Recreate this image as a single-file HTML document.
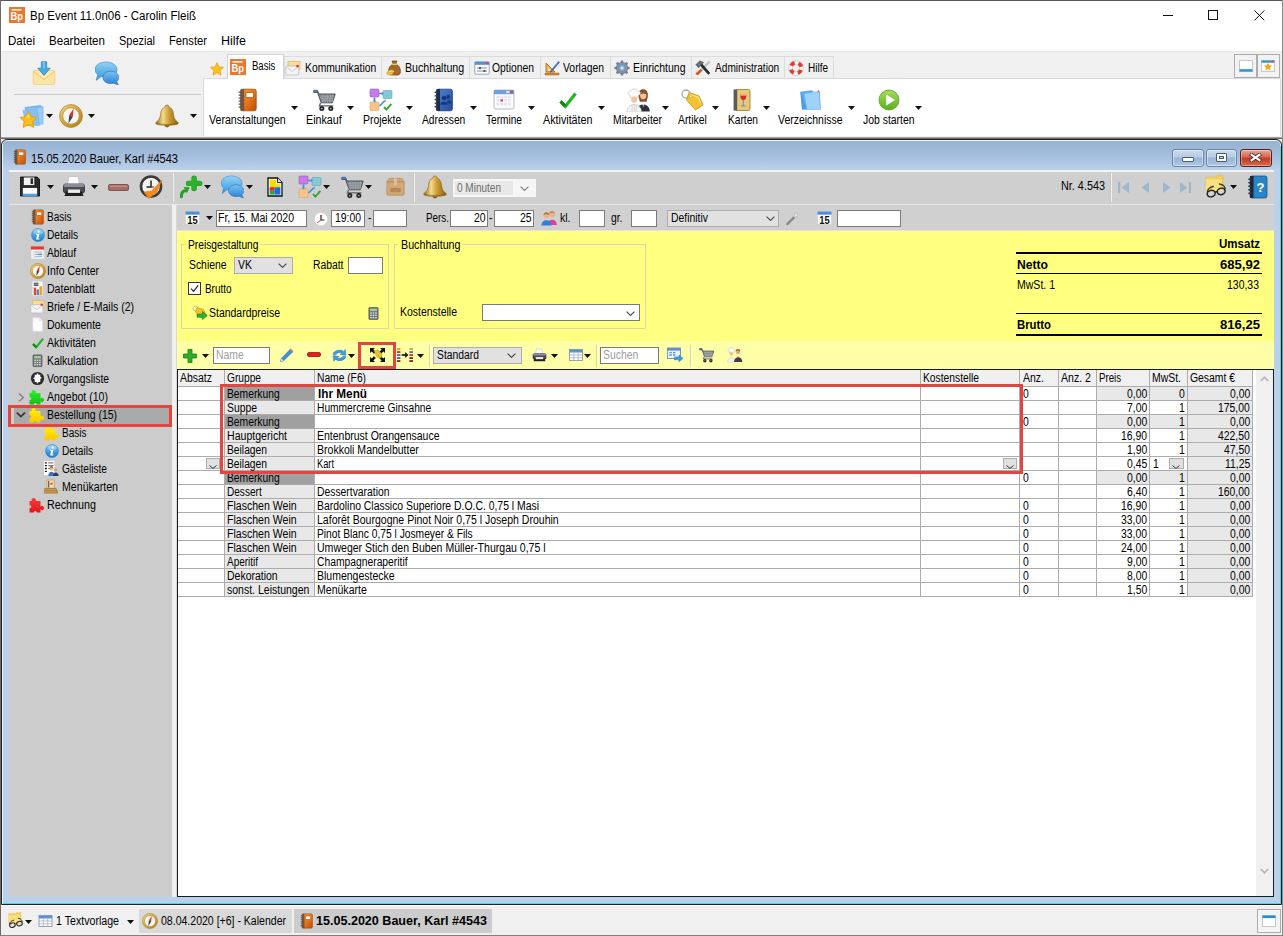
<!DOCTYPE html>
<html lang="de"><head><meta charset="utf-8"><title>Bp Event 11.0n06 - Carolin Fleiß</title>
<style>
html,body{margin:0;padding:0;}
body{width:1283px;height:936px;position:relative;overflow:hidden;background:#f0f0f0;font-family:"Liberation Sans",Arial,sans-serif;font-size:11px;color:#000;}
body div,body svg,body span.t{position:absolute;box-sizing:border-box;}
span.t{white-space:pre;line-height:16px;transform-origin:0 0;}

</style></head><body>
<svg style="left:0;top:0;" width="0" height="0" aria-hidden="true"><defs><linearGradient id="chA" x1="0" y1="0" x2="0" y2="1"><stop offset="0" stop-color="#96d2f4"/><stop offset="1" stop-color="#2f96de"/></linearGradient><linearGradient id="chB" x1="0" y1="0" x2="0" y2="1"><stop offset="0" stop-color="#7cc0f0"/><stop offset="1" stop-color="#2580d4"/></linearGradient><linearGradient id="cpG" x1="0" y1="0" x2="1" y2="1"><stop offset="0" stop-color="#f2dc92"/><stop offset=".5" stop-color="#d4a23a"/><stop offset="1" stop-color="#b07f1c"/></linearGradient><linearGradient id="blG" x1="0" y1="0" x2="1" y2="0"><stop offset="0" stop-color="#9a7018"/><stop offset=".32" stop-color="#f2da8e"/><stop offset=".6" stop-color="#cc9b32"/><stop offset="1" stop-color="#8a6210"/></linearGradient><linearGradient id="nbG" x1="0" y1="0" x2="1" y2="1"><stop offset="0" stop-color="#f59a3a"/><stop offset=".5" stop-color="#e8761a"/><stop offset="1" stop-color="#b8500a"/></linearGradient><linearGradient id="abG" x1="0" y1="0" x2="1" y2="1"><stop offset="0" stop-color="#4f86d4"/><stop offset="1" stop-color="#234a9a"/></linearGradient><linearGradient id="pgG" x1="0" y1="0" x2="0" y2="1"><stop offset="0" stop-color="#a6dc5a"/><stop offset="1" stop-color="#5fae1e"/></linearGradient><linearGradient id="inG" x1="0" y1="0" x2="0" y2="1"><stop offset="0" stop-color="#7cc4f0"/><stop offset="1" stop-color="#1a7ccc"/></linearGradient><linearGradient id="pzg" x1="0" y1="0" x2="0" y2="1"><stop offset="0" stop-color="#30f030"/><stop offset="1" stop-color="#10c010"/></linearGradient><linearGradient id="pzy" x1="0" y1="0" x2="0" y2="1"><stop offset="0" stop-color="#fff400"/><stop offset="1" stop-color="#ffc400"/></linearGradient><linearGradient id="pzr" x1="0" y1="0" x2="0" y2="1"><stop offset="0" stop-color="#ff3838"/><stop offset="1" stop-color="#e01818"/></linearGradient></defs></svg>
<div style="left:0px;top:0px;width:1283px;height:936px;background:#f0f0f0;"></div>
<div style="left:0px;top:0px;width:1283px;height:51px;background:#fff;"></div>
<svg style="left:9px;top:7px;" width="16" height="16" viewBox="0 0 16 16.000"><rect x="0" y="0" width="16" height="16" fill="#e9772c"/><rect x="2.5" y="2.2" width="10" height="1.4" fill="#fff"/><text x="1.6" y="13" font-family="Liberation Sans,sans-serif" font-size="11" font-weight="700" fill="#fff" textLength="12.5" lengthAdjust="spacingAndGlyphs">Bp</text></svg>
<span class="t" style="left:30.00px;top:7.84px;font-size:12px;transform:scaleX(0.9584);">Bp Event 11.0n06 - Carolin Fleiß</span>
<div style="left:1163px;top:15px;width:10px;height:1px;background:#111;"></div>
<div style="left:1208px;top:10px;width:10px;height:10px;border:1px solid #111;"></div>
<svg style="left:1254px;top:10px;" width="11" height="11" viewBox="0 0 11 11"><path d="M.5 .5 L10.3 10.3 M10.3 .5 L.5 10.3" stroke="#111" stroke-width="1"/></svg>
<span class="t" style="left:8.00px;top:32.84px;font-size:12px;transform:scaleX(0.9637);">Datei</span>
<span class="t" style="left:49.00px;top:32.84px;font-size:12px;transform:scaleX(0.9647);">Bearbeiten</span>
<span class="t" style="left:119.00px;top:32.84px;font-size:12px;transform:scaleX(0.9146);">Spezial</span>
<span class="t" style="left:169.00px;top:32.84px;font-size:12px;transform:scaleX(0.9339);">Fenster</span>
<span class="t" style="left:221.00px;top:32.84px;font-size:12px;transform:scaleX(1.0410);">Hilfe</span>
<div style="left:0px;top:51px;width:1283px;height:87px;background:#f0f0f0;"></div>
<div style="left:0px;top:51px;width:1283px;height:1px;background:#e9e9e9;"></div>
<svg style="left:32px;top:61px;" width="24" height="24" viewBox="0 0 24 24.000"><rect x="1.2" y="9.6" width="21.6" height="14" rx="1.2" fill="#fae6a6" stroke="#ecd07c" stroke-width=".8"/><path d="M1.6 10.2 L12 18.6 L22.4 10.2" fill="#fbeab4" stroke="#e6c766" stroke-width="1"/><path d="M1.8 23 L9.6 16.2 M22.2 23 L14.4 16.2" stroke="#efd78c" stroke-width=".9"/><path d="M9.4 .8 h5.2 v6.4 h3.6 L12 14.4 L5.8 7.2 h3.6 z" fill="#48aae4" stroke="#2886c8" stroke-width=".8"/><path d="M10.4 1.6 h1.6 v6" stroke="#9ad4f4" stroke-width="1" fill="none"/></svg>
<svg style="left:95px;top:61px;" width="24" height="24" viewBox="0 0 24 24.000"><path d="M11 1 C17.2 1 22 4.4 22 8.6 C22 12.8 17.2 16.2 11 16.2 C9.2 16.2 7.6 15.9 6.2 15.4 L1.2 19.4 L2.8 13.6 C1.1 12.3 0 10.5 0 8.6 C0 4.4 4.8 1 11 1z" fill="url(#chA)" stroke="#3584cc" stroke-width=".6"/><path d="M15.8 10.2 C20.2 10.2 23.8 12.9 23.8 16.4 C23.8 18 23 19.5 21.7 20.6 L23.4 24 L18.8 22.2 C17.9 22.5 16.9 22.6 15.8 22.6 C11.4 22.6 7.9 19.9 7.9 16.4 C7.9 12.9 11.4 10.2 15.8 10.2z" fill="url(#chB)" stroke="#2a70bc" stroke-width=".6"/></svg>
<div style="left:14px;top:94px;width:187px;height:1px;background:#c8c8c8;"></div>
<svg style="left:20px;top:104px;" width="24" height="24" viewBox="0 0 24 24.000"><path d="M5 3.4 L20 1.6 L23 3 V20 H8z" fill="#74b4f0" stroke="#5a9ee0" stroke-width=".5"/><path d="M7 4.6 L22.6 3.2 V20.4 H9.4z" fill="#9accf8"/><path d="M3 6.4 L17 4.8 L19.4 21.4 H6z" fill="#86c0f6" stroke="#64a8ea" stroke-width=".5"/><path d="M8.4 7.4 l2.6 5.3 5.8.8 -4.2 4.1 1 5.8 -5.2 -2.8 -5.2 2.8 1 -5.8 -4.2 -4.1 5.8 -.8z" fill="#fcbf17" stroke="#e89a06" stroke-width=".9"/><path d="M8.4 9.6 l1.8 3.8 -4.8 .6z" fill="#fde27a" opacity=".7"/></svg>
<svg style="left:46px;top:114px;" width="7" height="4" viewBox="0 0 7 4"><path d="M0 0 h7 L3.5 4z" fill="#111"/></svg>
<svg style="left:59px;top:104px;" width="24" height="24" viewBox="0 0 24 24.000"><circle cx="12" cy="12" r="11.4" fill="url(#cpG)" stroke="#a87a18" stroke-width=".7"/><circle cx="12" cy="12" r="8.3" fill="#f6f6f2" stroke="#b98c2a" stroke-width=".8"/><path d="M14.6 4.6 L13.7 12.9 L10.3 11.1z" fill="#e32828"/><path d="M9.4 19.4 L10.3 11.1 L13.7 12.9z" fill="#3c3c44"/></svg>
<svg style="left:88px;top:114px;" width="7" height="4" viewBox="0 0 7 4"><path d="M0 0 h7 L3.5 4z" fill="#111"/></svg>
<svg style="left:155px;top:104px;" width="24" height="24" viewBox="0 0 24 24.000"><ellipse cx="12" cy="21.6" rx="2.4" ry="1.8" fill="#8a6414"/><path d="M12 1 c1.3 0 2 .8 1.9 1.9 c2.9 1 4.2 3.8 4.6 7.6 c.4 3.6 1.6 5.8 4.2 7.6 c.8.6.7 1.9 -.4 2.2 c-3 .8 -6.4 1.1 -10.3 1.1 s-7.300 -.3 -10.3 -1.1 c-1.100 -.3 -1.200 -1.600 -.4 -2.200 c2.600 -1.800 3.800 -4 4.200 -7.600 c.4 -3.800 1.700 -6.600 4.600 -7.600 c-.1 -1.100 .6 -1.900 1.900 -1.900z" fill="url(#blG)" stroke="#86600e" stroke-width=".6"/><path d="M2 19.4 c6 1.500 14 1.500 20 0" fill="none" stroke="#7a5608" stroke-width=".8" opacity=".7"/></svg>
<svg style="left:190px;top:114px;" width="7" height="4" viewBox="0 0 7 4"><path d="M0 0 h7 L3.5 4z" fill="#111"/></svg>
<div style="left:203px;top:78px;width:1078px;height:58px;background:#fff;border:1px solid #dadada;border-bottom:none;"></div>
<svg style="left:209.5px;top:61.5px;" width="14" height="14" viewBox="0 0 16 16.000"><path d="M8 .8 l2.2 4.8 5.2.6 -3.9 3.6 1.1 5.2 -4.6 -2.7 -4.6 2.7 1.1 -5.2 -3.9 -3.6 5.2 -.6z" fill="#fcc21b" stroke="#e39a0a" stroke-width=".8"/></svg>
<div style="left:284px;top:56px;width:98px;height:23px;background:#f0f0f0;border:1px solid #dcdcdc;border-bottom-color:#dadada;"></div>
<svg style="left:285px;top:60px;" width="16" height="16" viewBox="0 0 16 16.000"><rect x="3" y="1.5" width="12" height="8" fill="#f7df9b" stroke="#dcbb5a" stroke-width=".8"/><rect x=".8" y="6" width="13" height="9" rx="1" fill="#f4f4f6" stroke="#b9bcc4" stroke-width=".8"/><path d="M1.2 6.6 L7.3 11.5 L13.4 6.6" fill="none" stroke="#c2c5cc" stroke-width=".8"/><rect x="11.4" y="5" width="2.2" height="2.2" fill="#e21d1d"/></svg>
<span class="t" style="left:304.50px;top:59.84px;font-size:12px;transform:scaleX(0.8607);">Kommunikation</span>
<div style="left:381px;top:56px;width:89px;height:23px;background:#f0f0f0;border:1px solid #dcdcdc;border-bottom-color:#dadada;"></div>
<svg style="left:386px;top:60px;" width="16" height="16" viewBox="0 0 16 16.000"><path d="M6 1 h5 l-1.2 3 c4 2 5.2 5.5 4.4 9 c-.5 1.6 -1.6 2 -3 2 h-5.4 c-1.4 0 -2.5 -.4 -3 -2 c-.8 -3.5 .4 -7 4.4 -9z" fill="#a5672a" stroke="#6f4213" stroke-width=".7"/><rect x="5.6" y="3.6" width="5.6" height="1.4" fill="#e8c66a"/><ellipse cx="3.8" cy="13.2" rx="3.2" ry="1.6" fill="#f3c83c" stroke="#c7962b" stroke-width=".6"/><ellipse cx="5.2" cy="11.4" rx="3" ry="1.4" fill="#f7d55a" stroke="#c7962b" stroke-width=".6"/></svg>
<span class="t" style="left:404.50px;top:59.84px;font-size:12px;transform:scaleX(0.8871);">Buchhaltung</span>
<div style="left:469px;top:56px;width:72px;height:23px;background:#f0f0f0;border:1px solid #dcdcdc;border-bottom-color:#dadada;"></div>
<svg style="left:474px;top:60px;" width="16" height="16" viewBox="0 0 16 16.000"><rect x=".8" y="1.8" width="14.4" height="12.4" rx="1" fill="#fbfbfd" stroke="#8fa3bd" stroke-width=".9"/><rect x=".8" y="1.8" width="14.4" height="3" fill="#5b8fd0"/><rect x="11.4" y="2.4" width="2.6" height="1.6" fill="#e4483c"/><path d="M3 8 h10 M3 11 h10" stroke="#8a93a0" stroke-width="1"/><rect x="5" y="7" width="2" height="2" fill="#556"/><rect x="9.4" y="10" width="2" height="2" fill="#556"/></svg>
<span class="t" style="left:492.00px;top:59.84px;font-size:12px;transform:scaleX(0.8624);">Optionen</span>
<div style="left:540px;top:56px;width:71px;height:23px;background:#f0f0f0;border:1px solid #dcdcdc;border-bottom-color:#dadada;"></div>
<svg style="left:544px;top:60px;" width="16" height="16" viewBox="0 0 16 16.000"><path d="M1 13 h14 v2 h-14z" fill="#d9862a" stroke="#a9601a" stroke-width=".5"/><path d="M2 3 L11 12 H2z" fill="#f0b25c" stroke="#b36a1c" stroke-width=".9"/><path d="M4.3 8 L7.3 10.9 H4.3z" fill="#f0f0f0"/><path d="M14.5 1.5 L7 10.5 L6.3 12.2 L8 11.3 L15.5 2.3z" fill="#4a7fd0" stroke="#2c55a0" stroke-width=".6"/></svg>
<span class="t" style="left:563.00px;top:59.84px;font-size:12px;transform:scaleX(0.8654);">Vorlagen</span>
<div style="left:610px;top:56px;width:82px;height:23px;background:#f0f0f0;border:1px solid #dcdcdc;border-bottom-color:#dadada;"></div>
<svg style="left:614px;top:60px;" width="16" height="16" viewBox="0 0 16 16.000"><rect x="6.7" y=".4" width="2.6" height="3.2" rx=".5" fill="#7e8794" transform="rotate(0 8 8)"/><rect x="6.7" y=".4" width="2.6" height="3.2" rx=".5" fill="#7e8794" transform="rotate(45 8 8)"/><rect x="6.7" y=".4" width="2.6" height="3.2" rx=".5" fill="#7e8794" transform="rotate(90 8 8)"/><rect x="6.7" y=".4" width="2.6" height="3.2" rx=".5" fill="#7e8794" transform="rotate(135 8 8)"/><rect x="6.7" y=".4" width="2.6" height="3.2" rx=".5" fill="#7e8794" transform="rotate(180 8 8)"/><rect x="6.7" y=".4" width="2.6" height="3.2" rx=".5" fill="#7e8794" transform="rotate(225 8 8)"/><rect x="6.7" y=".4" width="2.6" height="3.2" rx=".5" fill="#7e8794" transform="rotate(270 8 8)"/><rect x="6.7" y=".4" width="2.6" height="3.2" rx=".5" fill="#7e8794" transform="rotate(315 8 8)"/><circle cx="8" cy="8" r="5.6" fill="#8b95a3" stroke="#646d7a" stroke-width=".7"/><circle cx="8" cy="8" r="3.400" fill="#7fb0dc" stroke="#5580a8" stroke-width=".6"/><circle cx="8" cy="8" r="1.5" fill="#dfe8f2"/></svg>
<span class="t" style="left:633.00px;top:59.84px;font-size:12px;transform:scaleX(0.8743);">Einrichtung</span>
<div style="left:691px;top:56px;width:94px;height:23px;background:#f0f0f0;border:1px solid #dcdcdc;border-bottom-color:#dadada;"></div>
<svg style="left:695px;top:60px;" width="16" height="16" viewBox="0 0 16 16.000"><path d="M13.800 1.200 L15 2.400 L5.600 11.800 L4.400 10.600z" fill="#c8ccd2" stroke="#8a9098" stroke-width=".4"/><path d="M5.800 9.400 L7 10.600 L2.600 15.200 L.8 13.400z" fill="#e8502a" stroke="#a8300e" stroke-width=".5"/><path d="M4.200 4.600 L6.200 2.600 L15.200 13 L13.200 14.800z" fill="#2a2a2e"/><path d="M.8 4.800 L4.800 .8 L8.600 2.600 L3.600 7.800z" fill="#6a7078" stroke="#3a3e44" stroke-width=".5"/></svg>
<span class="t" style="left:714.50px;top:59.84px;font-size:12px;transform:scaleX(0.8444);">Administration</span>
<div style="left:784px;top:56px;width:50px;height:23px;background:#f0f0f0;border:1px solid #dcdcdc;border-bottom-color:#dadada;"></div>
<svg style="left:788px;top:60px;" width="16" height="16" viewBox="0 0 16 16.000"><circle cx="8" cy="8" r="5.4" fill="none" stroke="#f4f4f4" stroke-width="4"/><circle cx="8" cy="8" r="5.4" fill="none" stroke="#e23a2e" stroke-width="4" stroke-dasharray="4.24 4.24" stroke-dashoffset="6.360"/><circle cx="8" cy="8" r="7.4" fill="none" stroke="#b8b8b8" stroke-width=".5"/><circle cx="8" cy="8" r="3.4" fill="none" stroke="#b8b8b8" stroke-width=".5"/></svg>
<span class="t" style="left:807.50px;top:59.84px;font-size:12px;transform:scaleX(0.8328);">Hilfe</span>
<div style="left:227px;top:54px;width:57px;height:25px;background:#fff;border:1px solid #d4d4d4;border-bottom:none;"></div>
<svg style="left:230px;top:59px;" width="16" height="16" viewBox="0 0 16 16.000"><rect x="0" y="0" width="16" height="16" fill="#e9772c"/><rect x="2.5" y="2.2" width="10" height="1.4" fill="#fff"/><text x="1.6" y="13" font-family="Liberation Sans,sans-serif" font-size="11" font-weight="700" fill="#fff" textLength="12.5" lengthAdjust="spacingAndGlyphs">Bp</text></svg>
<span class="t" style="left:251.70px;top:57.84px;font-size:12px;transform:scaleX(0.7940);">Basis</span>
<div style="left:1234px;top:54px;width:23px;height:24px;background:#f2f2f2;border:1px solid #adadad;"></div>
<svg style="left:1239px;top:60px;" width="14" height="12" viewBox="0 0 14 12"><rect x=".5" y=".5" width="13" height="11" fill="#fff" stroke="#c4c8cc"/><rect x=".5" y="9.2" width="13" height="2.4" fill="#2a96d8"/></svg>
<div style="left:1257px;top:54px;width:23px;height:24px;background:#f2f2f2;border:1px solid #adadad;"></div>
<svg style="left:1261px;top:60px;" width="14" height="12" viewBox="0 0 14 12"><rect x=".5" y=".5" width="13" height="11" fill="#fff" stroke="#c4c8cc"/><rect x=".5" y=".5" width="13" height="2.2" fill="#2a96d8"/><rect x="10.6" y=".6" width="2.2" height="1.8" fill="#e64a3c"/><path d="M7 2.6 l1.3 2.7 2.9.4 -2.2 2 .6 2.9 -2.6 -1.5 -2.6 1.5 .6 -2.9 -2.2 -2 2.9 -.4z" fill="#f8a81a"/></svg>
<svg style="left:236px;top:88px;" width="24" height="24" viewBox="0 0 24 24.000"><rect x="4.6" y="1.2" width="15.6" height="21.6" rx="2" fill="url(#nbG)" stroke="#a8480a" stroke-width=".8"/><rect x="4.6" y="1.2" width="3.6" height="21.6" fill="#5a4a42" opacity=".8"/><rect x="10" y="4.6" width="7.4" height="4.8" fill="#fbf3ea" stroke="#9a5a20" stroke-width=".7"/><rect x="2.4" y="3.4" width="4.2" height="1.4" rx=".7" fill="#55585e"/><rect x="2.4" y="6.4" width="4.2" height="1.4" rx=".7" fill="#55585e"/><rect x="2.4" y="9.4" width="4.2" height="1.4" rx=".7" fill="#55585e"/><rect x="2.4" y="12.4" width="4.2" height="1.4" rx=".7" fill="#55585e"/><rect x="2.4" y="15.4" width="4.2" height="1.4" rx=".7" fill="#55585e"/><rect x="2.4" y="18.4" width="4.2" height="1.4" rx=".7" fill="#55585e"/></svg>
<span class="t" style="left:209.00px;top:111.84px;font-size:12px;transform:scaleX(0.8841);">Veranstaltungen</span>
<svg style="left:291px;top:106px;" width="7" height="4" viewBox="0 0 7 4"><path d="M0 0 h7 L3.5 4z" fill="#111"/></svg>
<svg style="left:313px;top:88px;" width="24" height="24" viewBox="0 0 24 24.000"><path d="M.8 2.6 h3.8 l1.2 3.4 h16.4 l-2.8 8.8 h-11.2 l-3.6 -10.4 h-3.8z" fill="#858b92" stroke="#4a4f56" stroke-width="1"/><path d="M7 8.2 h14 M7.8 10.600 h12.600 M8.600 12.800 h11.400 M9.400 6.400 v8.400 M12 6.400 v8.400 M14.600 6.400 v8.400 M17.200 6.400 v8.400 M19.600 6.400 v8" stroke="#aeb2b8" stroke-width=".5"/><path d="M7.6 15 l-1.2 2.800 h14" fill="none" stroke="#5a6068" stroke-width="1.3"/><circle cx="8.8" cy="20.6" r="2.500" fill="#222428"/><circle cx="17.800" cy="20.600" r="2.500" fill="#222428"/><circle cx="8.8" cy="20.600" r=".9" fill="#aaa"/><circle cx="17.800" cy="20.600" r=".9" fill="#aaa"/><path d="M.8 2.600 h3.800" stroke="#3a78c8" stroke-width="1.600"/></svg>
<span class="t" style="left:306.00px;top:111.84px;font-size:12px;transform:scaleX(0.8918);">Einkauf</span>
<svg style="left:347px;top:106px;" width="7" height="4" viewBox="0 0 7 4"><path d="M0 0 h7 L3.5 4z" fill="#111"/></svg>
<svg style="left:369px;top:88px;" width="24" height="24" viewBox="0 0 24 24.000"><rect x="1" y="1" width="9" height="8" rx="1" fill="#c77be8" stroke="#a05cc6" stroke-width=".6"/><rect x="14" y="2.5" width="9" height="8" rx="1" fill="#86c9d6" stroke="#5fa6b6" stroke-width=".6"/><rect x="1" y="14" width="9" height="8.5" rx="1" fill="#f8c48a" stroke="#e0a25e" stroke-width=".6"/><path d="M10 5.5 h3.5 M5.5 9.5 v4 M10.5 18 l5 -5" stroke="#3f8fe0" stroke-width="1.700"/><path d="M12.8 3.8 l2 1.7 -2 1.7z M3.8 12.6 l1.7 2 1.7 -2z M16.8 11.2 l-.3 2.8 -2.5 -.3z" fill="#4f8fd6"/><path d="M15 19 l2.400 2.600 L22.400 15.800" fill="none" stroke="#2eaa2e" stroke-width="1.900" stroke-linejoin="miter"/></svg>
<span class="t" style="left:362.50px;top:111.84px;font-size:12px;transform:scaleX(0.8676);">Projekte</span>
<svg style="left:406px;top:106px;" width="7" height="4" viewBox="0 0 7 4"><path d="M0 0 h7 L3.5 4z" fill="#111"/></svg>
<svg style="left:432px;top:88px;" width="24" height="24" viewBox="0 0 24 24.000"><rect x="4.400" y="1.200" width="16" height="21.600" rx="2" fill="url(#abG)" stroke="#1a3c84" stroke-width=".8"/><rect x="4.400" y="1.200" width="3.600" height="21.600" fill="#1c2c4c"/><circle cx="12" cy="10" r="2.300" fill="#16387e"/><path d="M8.200 16.800 c0 -4.200 7.600 -4.200 7.600 0z" fill="#16387e"/><circle cx="16.200" cy="9" r="1.900" fill="#16387e"/><path d="M14.800 14.200 c.6 -2.800 5 -2.400 5 .8 v.6 h-3.800z" fill="#16387e"/><rect x="2.400" y="3.6" width="3.600" height="1.400" rx=".7" fill="#3a3c40"/><rect x="2.400" y="7.2" width="3.600" height="1.400" rx=".7" fill="#3a3c40"/><rect x="2.400" y="10.8" width="3.600" height="1.400" rx=".7" fill="#3a3c40"/><rect x="2.400" y="14.4" width="3.600" height="1.400" rx=".7" fill="#3a3c40"/><rect x="2.400" y="18" width="3.600" height="1.400" rx=".7" fill="#3a3c40"/></svg>
<span class="t" style="left:421.70px;top:111.84px;font-size:12px;transform:scaleX(0.8540);">Adressen</span>
<svg style="left:470px;top:106px;" width="7" height="4" viewBox="0 0 7 4"><path d="M0 0 h7 L3.5 4z" fill="#111"/></svg>
<svg style="left:492px;top:88px;" width="24" height="24" viewBox="0 0 24 24.000"><rect x="2" y="2" width="20" height="19" rx="1.5" fill="#fbfcfe" stroke="#aab4c4" stroke-width=".9"/><rect x="2" y="2" width="20" height="4.2" fill="#6fa0dc"/><rect x="18" y="2.8" width="3" height="2.4" fill="#e24c3f"/><rect x="14.4" y="2.8" width="3" height="2.4" fill="#dbe6f5"/><rect x="4.6" y="7.6" width="2.6" height="2.4" fill="#dfe3ea"/><rect x="8.4" y="7.6" width="2.6" height="2.4" fill="#dfe3ea"/><rect x="12.2" y="7.6" width="2.6" height="2.4" fill="#dfe3ea"/><rect x="16" y="7.6" width="2.6" height="2.4" fill="#dfe3ea"/><rect x="4.6" y="11.2" width="2.6" height="2.4" fill="#dfe3ea"/><rect x="8.4" y="11.2" width="2.6" height="2.4" fill="#e85050"/><rect x="12.2" y="11.2" width="2.6" height="2.4" fill="#dfe3ea"/><rect x="16" y="11.2" width="2.6" height="2.4" fill="#dfe3ea"/><rect x="4.6" y="14.8" width="2.6" height="2.4" fill="#dfe3ea"/><rect x="8.4" y="14.8" width="2.6" height="2.4" fill="#dfe3ea"/><rect x="12.2" y="14.8" width="2.6" height="2.4" fill="#dfe3ea"/><rect x="16" y="14.8" width="2.6" height="2.4" fill="#dfe3ea"/></svg>
<span class="t" style="left:486.00px;top:111.84px;font-size:12px;transform:scaleX(0.8433);">Termine</span>
<svg style="left:528px;top:106px;" width="7" height="4" viewBox="0 0 7 4"><path d="M0 0 h7 L3.5 4z" fill="#111"/></svg>
<svg style="left:556px;top:88px;" width="24" height="24" viewBox="0 0 24 24.000"><path d="M4.6 13.4 L9.4 18.4 L19.6 5.4" fill="none" stroke="#22b422" stroke-width="3.2" stroke-linejoin="miter"/><path d="M4.6 13.4 L9.4 18.4" stroke="#0f8a0f" stroke-width="3.2"/></svg>
<span class="t" style="left:543.00px;top:111.84px;font-size:12px;transform:scaleX(0.8942);">Aktivitäten</span>
<svg style="left:598px;top:106px;" width="7" height="4" viewBox="0 0 7 4"><path d="M0 0 h7 L3.5 4z" fill="#111"/></svg>
<svg style="left:626px;top:88px;" width="24" height="24" viewBox="0 0 24 24.000"><path d="M12.600 9.200 c-.8 -5.600 1.600 -8 4.600 -8 s5.400 2.400 4.600 8 c-.6 2 -1 3 -1.200 4.600 h-6.800 c-.2 -1.600 -.6 -2.600 -1.200 -4.600z" fill="#8a5028"/><ellipse cx="17.200" cy="7.600" rx="3.100" ry="3.700" fill="#efc09a"/><path d="M13.800 6.600 c.8 -3.600 6 -3.600 6.800 0 c-2 -1.400 -4.800 -1.400 -6.800 0z" fill="#7a4420"/><path d="M10.400 23.600 c0 -9.600 13.400 -9.600 13.400 0z" fill="#2e3238"/><path d="M16 14.200 l1.200 5 1.200 -5z" fill="#f4f4f4"/><path d="M4.200 7.400 c-3 -.4 -2.800 -4.800 .6 -4.400 c.8 -2.800 6 -2.800 6.800 0 c3.400 -.4 3.600 4 .6 4.400 v2.400 h-8z" fill="#fafafa" stroke="#bcbcbc" stroke-width=".6"/><ellipse cx="8.200" cy="11.600" rx="3" ry="3.200" fill="#efc6a2"/><path d="M1 24 c0 -10 14.400 -10 14.400 0z" fill="#f5f5f5" stroke="#bcbcbc" stroke-width=".6"/><path d="M6 17 v6 M8.200 17 v6 M10.400 17 v6" stroke="#c8c8c8" stroke-width=".7"/></svg>
<span class="t" style="left:613.00px;top:111.84px;font-size:12px;transform:scaleX(0.8644);">Mitarbeiter</span>
<svg style="left:662px;top:106px;" width="7" height="4" viewBox="0 0 7 4"><path d="M0 0 h7 L3.5 4z" fill="#111"/></svg>
<svg style="left:680px;top:88px;" width="24" height="24" viewBox="0 0 24 24.000"><circle cx="6" cy="6" r="4" fill="none" stroke="#a9a9a9" stroke-width="1.3"/><path d="M9 4.5 L19 8 L23 17 L15.5 22 L6.5 12z" fill="#f2c230" stroke="#cf9a12" stroke-width=".9" stroke-linejoin="round"/><path d="M10 6.5 L18 9.3 L20.5 15" fill="none" stroke="#fbe48e" stroke-width="1.2"/><circle cx="10.6" cy="8.6" r="1.2" fill="#fff8dc" stroke="#b98a12" stroke-width=".5"/></svg>
<span class="t" style="left:678.00px;top:111.84px;font-size:12px;transform:scaleX(0.8607);">Artikel</span>
<svg style="left:712px;top:106px;" width="7" height="4" viewBox="0 0 7 4"><path d="M0 0 h7 L3.5 4z" fill="#111"/></svg>
<svg style="left:730px;top:88px;" width="24" height="24" viewBox="0 0 24 24.000"><rect x="5" y="1.5" width="15" height="21" rx="1.5" fill="#e7c878" stroke="#a98532" stroke-width=".9"/><rect x="3.6" y="1.5" width="3.6" height="21" fill="#5a5a5a"/><path d="M10.2 6.5 h6.2 c0 4 -1.2 5.6 -3.1 5.6 c-1.9 0 -3.1 -1.6 -3.1 -5.6z" fill="#d62a2a"/><path d="M10.2 6.5 h6.2 v1 h-6.2z" fill="#f6e6c0"/><path d="M13.3 12 v5.4 M10.8 18 h5" stroke="#7a94b8" stroke-width="1.2"/></svg>
<span class="t" style="left:727.50px;top:111.84px;font-size:12px;transform:scaleX(0.8484);">Karten</span>
<svg style="left:763px;top:106px;" width="7" height="4" viewBox="0 0 7 4"><path d="M0 0 h7 L3.5 4z" fill="#111"/></svg>
<svg style="left:798px;top:88px;" width="24" height="24" viewBox="0 0 24 24.000"><path d="M2.600 4 L14 2.600 L15.600 4.600 L21.400 4 L22.400 21 H4.400z" fill="#62acee" stroke="#4a96de" stroke-width=".5"/><path d="M6 5.600 L21 3.400 L22.600 21.400 H9z" fill="#9ed2fa" stroke="#6ab0ec" stroke-width=".5"/><path d="M2.600 4 L9 21.400 H4z" fill="#4f9ce4"/><circle cx="20.600" cy="3.200" r=".9" fill="#e85a7a"/></svg>
<span class="t" style="left:778.00px;top:111.84px;font-size:12px;transform:scaleX(0.8711);">Verzeichnisse</span>
<svg style="left:848px;top:106px;" width="7" height="4" viewBox="0 0 7 4"><path d="M0 0 h7 L3.5 4z" fill="#111"/></svg>
<svg style="left:877px;top:88px;" width="24" height="24" viewBox="0 0 24 24.000"><circle cx="12" cy="12" r="10" fill="url(#pgG)" stroke="#5a9e1c" stroke-width=".8"/><path d="M9.200 6.600 L18 12 L9.200 17.400z" fill="#fff"/></svg>
<span class="t" style="left:863.00px;top:111.84px;font-size:12px;transform:scaleX(0.8674);">Job starten</span>
<svg style="left:915px;top:106px;" width="7" height="4" viewBox="0 0 7 4"><path d="M0 0 h7 L3.5 4z" fill="#111"/></svg>
<div style="left:0px;top:137px;width:1283px;height:1px;background:#a4a49c;"></div>
<div style="left:0px;top:138px;width:1283px;height:1px;background:#6a6a6a;"></div>
<div style="left:1px;top:139px;width:1281px;height:766px;background:#b9d1ea;border:1px solid #202020;border-radius:6px 6px 0 0;box-shadow:inset 0 0 0 1px rgba(255,255,255,.75);"></div>
<div style="left:3px;top:141px;width:1277px;height:29px;background:linear-gradient(#97b2d2,#a3bcdb 45%,#b9d1eb);border-radius:4px 4px 0 0;"></div>
<div style="left:3px;top:903px;width:1278px;height:1px;background:#48d6ee;"></div>
<div style="left:1280px;top:146px;width:1px;height:758px;background:#48d6ee;"></div>
<svg style="left:12px;top:149px;" width="16" height="16" viewBox="0 0 24 24.000"><rect x="4.6" y="1.2" width="15.6" height="21.6" rx="2" fill="url(#nbG)" stroke="#a8480a" stroke-width=".8"/><rect x="4.6" y="1.2" width="3.6" height="21.6" fill="#5a4a42" opacity=".8"/><rect x="10" y="4.6" width="7.4" height="4.8" fill="#fbf3ea" stroke="#9a5a20" stroke-width=".7"/><rect x="2.4" y="3.4" width="4.2" height="1.4" rx=".7" fill="#55585e"/><rect x="2.4" y="6.4" width="4.2" height="1.4" rx=".7" fill="#55585e"/><rect x="2.4" y="9.4" width="4.2" height="1.4" rx=".7" fill="#55585e"/><rect x="2.4" y="12.4" width="4.2" height="1.4" rx=".7" fill="#55585e"/><rect x="2.4" y="15.4" width="4.2" height="1.4" rx=".7" fill="#55585e"/><rect x="2.4" y="18.4" width="4.2" height="1.4" rx=".7" fill="#55585e"/></svg>
<span class="t" style="left:31.00px;top:150.84px;font-size:12px;transform:scaleX(0.9218);">15.05.2020 Bauer, Karl #4543</span>
<div style="left:1172px;top:149px;width:32px;height:18px;background:linear-gradient(#c9daed,#b4cae5 45%,#98b5d8 50%,#aec7e3);border:1px solid #6a84a6;border-radius:3px;box-shadow:inset 0 0 0 1px rgba(255,255,255,.45);"></div>
<div style="left:1206px;top:149px;width:31px;height:18px;background:linear-gradient(#c9daed,#b4cae5 45%,#98b5d8 50%,#aec7e3);border:1px solid #6a84a6;border-radius:3px;box-shadow:inset 0 0 0 1px rgba(255,255,255,.45);"></div>
<div style="left:1240px;top:149px;width:32px;height:18px;background:linear-gradient(#e9a99c,#d4624e 45%,#c03a22 50%,#d96a4c);border:1px solid #5a2018;border-radius:3px;box-shadow:inset 0 0 0 1px rgba(255,255,255,.35);"></div>
<div style="left:1182px;top:157px;width:12px;height:5px;background:#fff;border:1px solid #4a5a70;border-radius:1px;"></div>
<div style="left:1216px;top:153px;width:11px;height:9px;background:#fff;border:1px solid #4a5a70;border-radius:1px;"></div>
<div style="left:1219px;top:156px;width:5px;height:3px;background:#b8cde6;border:1px solid #4a5a70;"></div>
<svg style="left:1249px;top:153px;" width="13" height="9" viewBox="0 0 13 9"><path d="M2.600 1.800 L10.400 7.200 M10.400 1.800 L2.600 7.200" stroke="#4a2a26" stroke-width="3.800" stroke-linecap="square"/><path d="M2.600 1.800 L10.400 7.200 M10.400 1.800 L2.600 7.200" stroke="#fff" stroke-width="2.200" stroke-linecap="square"/></svg>
<div style="left:9px;top:170px;width:1265px;height:2px;background:#f3f3f3;"></div>
<div style="left:9px;top:172px;width:1265px;height:32px;background:#d0cfcf;"></div>
<div style="left:9px;top:204px;width:1265px;height:1px;background:#e6e6e6;"></div>
<svg style="left:20px;top:176px;" width="20" height="21.5" viewBox="1.5 1.5 21 21.5"><path d="M2 2 h17.5 l2.5 2.5 v17.5 h-20z" fill="#2a2a2a" stroke="#000" stroke-width=".8"/><rect x="5.5" y="2.5" width="11" height="8" fill="#f4f4f4"/><rect x="12.6" y="3.4" width="2.6" height="6" fill="#2a2a2a"/><rect x="4.5" y="13.5" width="15" height="8.5" fill="#fafafa"/><rect x="4.5" y="19.6" width="15" height="2.4" fill="#4da3e8"/></svg>
<svg style="left:47px;top:185px;" width="7" height="4" viewBox="0 0 7 4"><path d="M0 0 h7 L3.5 4z" fill="#111"/></svg>
<svg style="left:62px;top:175px;" width="24" height="24" viewBox="0 0 24 24.000"><path d="M7 1.5 h9 l1.5 8 h-12z" fill="#fdfdfd" stroke="#bbb" stroke-width=".7"/><rect x="1.5" y="9" width="21" height="9" rx="2" fill="#4a4d52" stroke="#26282b" stroke-width=".8"/><rect x="1.5" y="9" width="21" height="3" rx="1.5" fill="#8b8f95"/><path d="M4 16.5 h16 l1.5 4.5 h-19z" fill="#1e2023"/><rect x="6" y="14.5" width="12" height="3.4" fill="#ececec"/></svg>
<svg style="left:91px;top:185px;" width="7" height="4" viewBox="0 0 7 4"><path d="M0 0 h7 L3.5 4z" fill="#111"/></svg>
<svg style="left:107.5px;top:183.8px;" width="21" height="7" viewBox="0 0 21 7"><rect x=".5" y=".5" width="20" height="6" rx="1.6" fill="#a46e64" stroke="#865248" stroke-width="1"/><rect x="2" y="1.4" width="17" height="1.6" rx=".8" fill="#fff" opacity=".25"/></svg>
<svg style="left:139px;top:175px;" width="24" height="24" viewBox="0 0 24 24.000"><circle cx="12" cy="11.5" r="10" fill="#f4f4f4" stroke="#3a3a3a" stroke-width="2.6"/><path d="M12 5.5 V12 H7.5" fill="none" stroke="#222" stroke-width="1.5"/><path d="M12 12 h3" stroke="#d22" stroke-width="1.2"/><path d="M5 17 l7.5 -1 L23 5 l-5.5 13 L9.5 23.5z" fill="#f28a1e" stroke="#d86c08" stroke-width=".5"/></svg>
<div style="left:172px;top:173px;width:1px;height:29px;background:#c6c6c6;"></div>
<div style="left:173px;top:173px;width:1px;height:29px;background:#f2f2f2;"></div>
<svg style="left:180px;top:175px;" width="24" height="24" viewBox="0 0 24 24.000"><path d="M8.600 8.400 H19.700 M14.100 3.200 V13.600" stroke="#1f9a1f" stroke-width="5.400" stroke-linecap="round"/><path d="M8.600 8.400 H19.700 M14.100 3.200 V13.600" stroke="#2db12d" stroke-width="4.200" stroke-linecap="round"/><path d="M1.400 21.800 C1.200 17.400 3 15.800 6.200 15.600" fill="none" stroke="#22a022" stroke-width="3" stroke-linecap="round"/><path d="M3.800 12 L9.800 12.300 L6.800 18.200z" fill="#22a022"/></svg>
<svg style="left:204px;top:185px;" width="7" height="4" viewBox="0 0 7 4"><path d="M0 0 h7 L3.5 4z" fill="#111"/></svg>
<svg style="left:221px;top:175px;" width="23" height="23" viewBox="0 0 24 24.000"><path d="M11 1 C17.2 1 22 4.4 22 8.6 C22 12.8 17.2 16.2 11 16.2 C9.2 16.2 7.6 15.9 6.2 15.4 L1.2 19.4 L2.8 13.6 C1.1 12.3 0 10.5 0 8.6 C0 4.4 4.8 1 11 1z" fill="url(#chA)" stroke="#3584cc" stroke-width=".6"/><path d="M15.8 10.2 C20.2 10.2 23.8 12.9 23.8 16.4 C23.8 18 23 19.5 21.7 20.6 L23.4 24 L18.8 22.2 C17.9 22.5 16.9 22.6 15.8 22.6 C11.4 22.6 7.9 19.9 7.9 16.4 C7.9 12.9 11.4 10.2 15.8 10.2z" fill="url(#chB)" stroke="#2a70bc" stroke-width=".6"/></svg>
<svg style="left:246px;top:185px;" width="7" height="4" viewBox="0 0 7 4"><path d="M0 0 h7 L3.5 4z" fill="#111"/></svg>
<svg style="left:267px;top:177px;" width="16" height="20" viewBox="0 0 16 20"><path d="M1 1 h9.5 l4.5 4.5 v13.5 h-14z" fill="#fff" stroke="#111" stroke-width="1.3"/><path d="M2.6 2.6 h6.4 v4.6 h4.4 v3 h-10.8z" fill="#f7dc00"/><rect x="2.6" y="10.2" width="4.8" height="3.6" fill="#e8242c"/><rect x="2.6" y="13.8" width="4.8" height="3.8" fill="#23a83a"/><rect x="7.4" y="10.2" width="6" height="7.4" fill="#1a6ee0"/><path d="M10.4 1 v4.6 h4.6" fill="#e8e8e8" stroke="#111" stroke-width="1"/></svg>
<svg style="left:298px;top:175px;" width="24" height="24" viewBox="0 0 24 24.000"><rect x="1" y="1" width="9" height="8" rx="1" fill="#c77be8" stroke="#a05cc6" stroke-width=".6"/><rect x="14" y="2.5" width="9" height="8" rx="1" fill="#86c9d6" stroke="#5fa6b6" stroke-width=".6"/><rect x="1" y="14" width="9" height="8.5" rx="1" fill="#f8c48a" stroke="#e0a25e" stroke-width=".6"/><path d="M10 5.5 h3.5 M5.5 9.5 v4 M10.5 18 l5 -5" stroke="#3f8fe0" stroke-width="1.700"/><path d="M12.8 3.8 l2 1.7 -2 1.7z M3.8 12.6 l1.7 2 1.7 -2z M16.8 11.2 l-.3 2.8 -2.5 -.3z" fill="#4f8fd6"/><path d="M15 19 l2.400 2.600 L22.400 15.800" fill="none" stroke="#2eaa2e" stroke-width="1.900" stroke-linejoin="miter"/></svg>
<svg style="left:323px;top:185px;" width="7" height="4" viewBox="0 0 7 4"><path d="M0 0 h7 L3.5 4z" fill="#111"/></svg>
<svg style="left:341px;top:175px;" width="24" height="24" viewBox="0 0 24 24.000"><path d="M.8 2.6 h3.8 l1.2 3.4 h16.4 l-2.8 8.8 h-11.2 l-3.6 -10.4 h-3.8z" fill="#858b92" stroke="#4a4f56" stroke-width="1"/><path d="M7 8.2 h14 M7.8 10.600 h12.600 M8.600 12.800 h11.400 M9.400 6.400 v8.400 M12 6.400 v8.400 M14.600 6.400 v8.400 M17.200 6.400 v8.400 M19.600 6.400 v8" stroke="#aeb2b8" stroke-width=".5"/><path d="M7.6 15 l-1.2 2.800 h14" fill="none" stroke="#5a6068" stroke-width="1.3"/><circle cx="8.8" cy="20.6" r="2.500" fill="#222428"/><circle cx="17.800" cy="20.600" r="2.500" fill="#222428"/><circle cx="8.8" cy="20.600" r=".9" fill="#aaa"/><circle cx="17.800" cy="20.600" r=".9" fill="#aaa"/><path d="M.8 2.600 h3.800" stroke="#3a78c8" stroke-width="1.600"/></svg>
<svg style="left:365px;top:185px;" width="7" height="4" viewBox="0 0 7 4"><path d="M0 0 h7 L3.5 4z" fill="#111"/></svg>
<svg style="left:385.5px;top:177px;" width="19" height="20" viewBox="1 1 22 22"><path d="M2 6 L5 2 h14 l3 4 v14 a1.5 1.5 0 0 1 -1.5 1.5 h-17 a1.5 1.5 0 0 1 -1.5 -1.5z" fill="#d2a878" stroke="#b0865a" stroke-width=".8"/><path d="M2 6 h20" stroke="#a77a4c" stroke-width=".8"/><rect x="10.4" y="2" width="3.2" height="8" fill="#e2c19c"/><rect x="6" y="13" width="12" height="5" fill="#b58858"/></svg>
<div style="left:413px;top:173px;width:1px;height:29px;background:#c6c6c6;"></div>
<div style="left:414px;top:173px;width:1px;height:29px;background:#f2f2f2;"></div>
<svg style="left:423px;top:175px;" width="24" height="24" viewBox="0 0 24 24.000"><ellipse cx="12" cy="21.6" rx="2.4" ry="1.8" fill="#8a6414"/><path d="M12 1 c1.3 0 2 .8 1.9 1.9 c2.9 1 4.2 3.8 4.6 7.6 c.4 3.6 1.6 5.8 4.2 7.6 c.8.6.7 1.9 -.4 2.2 c-3 .8 -6.4 1.1 -10.3 1.1 s-7.300 -.3 -10.3 -1.1 c-1.100 -.3 -1.200 -1.600 -.4 -2.200 c2.600 -1.800 3.800 -4 4.200 -7.600 c.4 -3.800 1.700 -6.600 4.600 -7.600 c-.1 -1.100 .6 -1.900 1.900 -1.900z" fill="url(#blG)" stroke="#86600e" stroke-width=".6"/><path d="M2 19.4 c6 1.500 14 1.500 20 0" fill="none" stroke="#7a5608" stroke-width=".8" opacity=".7"/></svg>
<div style="left:453px;top:179px;width:83px;height:18px;background:#f6f6f6;"></div>
<div style="left:455px;top:181px;width:58px;height:14px;background:#e8e8e8;"></div>
<span class="t" style="left:457.00px;top:179.84px;font-size:12px;transform:scaleX(0.8349);color:#6d6d6d;">0 Minuten</span>
<svg style="left:520px;top:186px;" width="9" height="5" viewBox="0 0 9 5"><path d="M.6 .6 L4.5 4.4 L8.4 .6" fill="none" stroke="#7a7a7a" stroke-width="1.1"/></svg>
<span class="t" style="left:1061.00px;top:177.84px;font-size:12px;transform:scaleX(0.9034);">Nr. 4.543</span>
<div style="left:1110px;top:173px;width:1px;height:29px;background:#c6c6c6;"></div>
<div style="left:1111px;top:173px;width:1px;height:29px;background:#f2f2f2;"></div>
<svg style="left:1117px;top:181px;" width="13" height="13" viewBox="0 0 13 13"><rect x="1" y="1" width="2.2" height="11" fill="#9db7cf"/><path d="M12 1 L4.5 6.5 L12 12z" fill="#9db7cf"/></svg>
<svg style="left:1139px;top:181px;" width="13" height="13" viewBox="0 0 13 13"><path d="M10 1 L2.5 6.5 L10 12z" fill="#9db7cf"/></svg>
<svg style="left:1160px;top:181px;" width="13" height="13" viewBox="0 0 13 13"><path d="M3 1 L10.5 6.5 L3 12z" fill="#9db7cf"/></svg>
<svg style="left:1179px;top:181px;" width="13" height="13" viewBox="0 0 13 13"><rect x="9.8" y="1" width="2.2" height="11" fill="#9db7cf"/><path d="M1 1 L8.5 6.5 L1 12z" fill="#9db7cf"/></svg>
<svg style="left:1205px;top:175px;" width="24" height="24" viewBox="0 0 24 24.000"><path d="M1 2 h9.600 l1.600 -1.400 h6 v15.400 h-17.200z" fill="#f0d060" stroke="#dcbc48" stroke-width=".5"/><path d="M1 4.400 h15.600 v11.600 h-15.600z" fill="#f8e07e"/><ellipse cx="6.200" cy="18.600" rx="4" ry="3.200" fill="#d8d8d0" fill-opacity=".55" stroke="#222" stroke-width="1.500" transform="rotate(-14 6.2 18.6)"/><ellipse cx="16.200" cy="16.400" rx="4" ry="3.200" fill="#d8d8d0" fill-opacity=".55" stroke="#222" stroke-width="1.500" transform="rotate(-14 16.2 16.4)"/><path d="M10 17.400 c.8 -.9 1.600 -1.100 2.400 -.5 M19.800 14.600 c1 -2.400 -1.600 -5.400 -5.800 -5.800 M2.400 17.600 c-.6 -3 2.400 -5.600 6.400 -6.200" fill="none" stroke="#222" stroke-width="1.200"/></svg>
<svg style="left:1230px;top:185px;" width="7" height="4" viewBox="0 0 7 4"><path d="M0 0 h7 L3.5 4z" fill="#111"/></svg>
<svg style="left:1246px;top:175px;" width="24" height="24" viewBox="0 0 24 24.000"><rect x="4" y="1" width="17" height="22" rx="2" fill="#2a84c8" stroke="#14568c" stroke-width=".8"/><rect x="4" y="1" width="3.600" height="22" fill="#1c2a3c"/><rect x="2.2" y="3.5" width="3.4" height="1.4" rx=".6" fill="#333"/><rect x="2.2" y="7" width="3.4" height="1.4" rx=".6" fill="#333"/><rect x="2.2" y="10.5" width="3.4" height="1.4" rx=".6" fill="#333"/><rect x="2.2" y="14" width="3.4" height="1.4" rx=".6" fill="#333"/><rect x="2.2" y="17.5" width="3.4" height="1.4" rx=".6" fill="#333"/><text x="14.4" y="17" text-anchor="middle" font-family="Liberation Sans,sans-serif" font-size="13" font-weight="700" fill="#fff">?</text></svg>
<div style="left:9px;top:205px;width:163px;height:692px;background:#cccccc;"></div>
<div style="left:172px;top:205px;width:5px;height:692px;background:#f0f0f0;"></div>
<div style="left:176px;top:205px;width:1px;height:692px;background:#d8d8d8;"></div>
<div style="left:14px;top:408px;width:156px;height:16px;background:#aaaaaa;"></div>
<svg style="left:30px;top:209px;" width="16" height="16" viewBox="0 0 24 24.000"><rect x="4.6" y="1.2" width="15.6" height="21.6" rx="2" fill="url(#nbG)" stroke="#a8480a" stroke-width=".8"/><rect x="4.6" y="1.2" width="3.6" height="21.6" fill="#5a4a42" opacity=".8"/><rect x="10" y="4.6" width="7.4" height="4.8" fill="#fbf3ea" stroke="#9a5a20" stroke-width=".7"/><rect x="2.4" y="3.4" width="4.2" height="1.4" rx=".7" fill="#55585e"/><rect x="2.4" y="6.4" width="4.2" height="1.4" rx=".7" fill="#55585e"/><rect x="2.4" y="9.4" width="4.2" height="1.4" rx=".7" fill="#55585e"/><rect x="2.4" y="12.4" width="4.2" height="1.4" rx=".7" fill="#55585e"/><rect x="2.4" y="15.4" width="4.2" height="1.4" rx=".7" fill="#55585e"/><rect x="2.4" y="18.4" width="4.2" height="1.4" rx=".7" fill="#55585e"/></svg>
<span class="t" style="left:47.00px;top:208.84px;font-size:12px;transform:scaleX(0.8349);">Basis</span>
<svg style="left:31.3px;top:228.2px;" width="14" height="14" viewBox="0 0 16 16.000"><circle cx="8" cy="8" r="7.500" fill="url(#inG)" stroke="#2a88d0" stroke-width=".6"/><ellipse cx="8" cy="4.400" rx="5.400" ry="3" fill="#fff" opacity=".3"/><circle cx="8.800" cy="4.200" r="1.300" fill="#fff"/><path d="M6 6.800 h3.600 l-1.200 5.200 h1.400 l-.2 1.200 h-3.800 l1.200 -5.200 h-1.200z" fill="#fff"/></svg>
<span class="t" style="left:47.00px;top:226.84px;font-size:12px;transform:scaleX(0.8450);">Details</span>
<svg style="left:30px;top:245px;" width="15" height="15" viewBox="0 0 16 16.000"><rect x="1" y="1.5" width="14" height="13.5" fill="#fdfdfd" stroke="#c4c8ce" stroke-width=".8"/><rect x="1" y="1.5" width="14" height="3.4" fill="#e23b34"/><path d="M3 7.5 h10 M3 10 h10 M3 12.5 h10" stroke="#8fa9cc" stroke-width="1.2"/><rect x="3" y="6.8" width="2.4" height="6.6" fill="#dfe6ef"/><rect x="9" y="9.3" width="4" height="1.6" fill="#4a90e2"/></svg>
<span class="t" style="left:47.00px;top:244.84px;font-size:12px;transform:scaleX(0.8522);">Ablauf</span>
<svg style="left:30px;top:263px;" width="16" height="16" viewBox="0 0 24 24.000"><circle cx="12" cy="12" r="11.4" fill="url(#cpG)" stroke="#a87a18" stroke-width=".7"/><circle cx="12" cy="12" r="8.3" fill="#f6f6f2" stroke="#b98c2a" stroke-width=".8"/><path d="M14.6 4.6 L13.7 12.9 L10.3 11.1z" fill="#e32828"/><path d="M9.4 19.4 L10.3 11.1 L13.7 12.9z" fill="#3c3c44"/></svg>
<span class="t" style="left:47.00px;top:262.84px;font-size:12px;transform:scaleX(0.8758);">Info Center</span>
<svg style="left:30px;top:281px;" width="15" height="15" viewBox="0 0 16 16.000"><rect x="2.5" y="0.5" width="11" height="15" fill="#fff" stroke="#d8d8d8" stroke-width=".6"/><path d="M4 2.4 h5 M4 4.4 h5" stroke="#222" stroke-width="1.1"/><rect x="4" y="7" width="2.6" height="8" fill="#e8442e"/><rect x="7" y="9" width="2.6" height="6" fill="#3b8ee0"/><rect x="10" y="5.6" width="2.8" height="9.4" fill="#f2a61c"/></svg>
<span class="t" style="left:47.00px;top:280.84px;font-size:12px;transform:scaleX(0.8775);">Datenblatt</span>
<svg style="left:30px;top:299px;" width="15" height="15" viewBox="0 0 16 16.000"><rect x="3" y="1.5" width="12" height="8" fill="#f7df9b" stroke="#dcbb5a" stroke-width=".8"/><rect x=".8" y="6" width="13" height="9" rx="1" fill="#f4f4f6" stroke="#b9bcc4" stroke-width=".8"/><path d="M1.2 6.6 L7.3 11.5 L13.4 6.6" fill="none" stroke="#c2c5cc" stroke-width=".8"/><rect x="11.4" y="5" width="2.2" height="2.2" fill="#e21d1d"/></svg>
<span class="t" style="left:47.00px;top:298.84px;font-size:12px;transform:scaleX(0.8756);">Briefe / E-Mails (2)</span>
<svg style="left:30px;top:317px;" width="15" height="15" viewBox="0 0 16 16.000"><path d="M3 .8 h7 l3.4 3.4 v11 h-10.4z" fill="#fdfdfd" stroke="#dcdcdc" stroke-width=".7"/><path d="M10 .8 v3.4 h3.4" fill="#ececec" stroke="#dcdcdc" stroke-width=".6"/></svg>
<span class="t" style="left:47.00px;top:316.84px;font-size:12px;transform:scaleX(0.8798);">Dokumente</span>
<svg style="left:30px;top:335px;" width="16" height="16" viewBox="0 0 24 24.000"><path d="M4.6 13.4 L9.4 18.4 L19.6 5.4" fill="none" stroke="#22b422" stroke-width="3.2" stroke-linejoin="miter"/><path d="M4.6 13.4 L9.4 18.4" stroke="#0f8a0f" stroke-width="3.2"/></svg>
<span class="t" style="left:47.00px;top:334.84px;font-size:12px;transform:scaleX(0.8851);">Aktivitäten</span>
<svg style="left:30px;top:353px;" width="15" height="15" viewBox="0 0 16 16.000"><rect x="3.2" y="2" width="9.6" height="12.5" rx="1" fill="#6e7278" stroke="#4c5055" stroke-width=".7"/><rect x="4.4" y="3.2" width="7.2" height="2.6" fill="#9fd08a"/><rect x="4.5" y="7" width="1.7" height="1.5" fill="#d8dade"/><rect x="7.1" y="7" width="1.7" height="1.5" fill="#d8dade"/><rect x="9.7" y="7" width="1.7" height="1.5" fill="#d8dade"/><rect x="4.5" y="9.4" width="1.7" height="1.5" fill="#d8dade"/><rect x="7.1" y="9.4" width="1.7" height="1.5" fill="#d8dade"/><rect x="9.7" y="9.4" width="1.7" height="1.5" fill="#d8dade"/><rect x="4.5" y="11.8" width="1.7" height="1.5" fill="#d8dade"/><rect x="7.1" y="11.8" width="1.7" height="1.5" fill="#d8dade"/><rect x="9.7" y="11.8" width="1.7" height="1.5" fill="#d8dade"/></svg>
<span class="t" style="left:47.00px;top:352.84px;font-size:12px;transform:scaleX(0.8685);">Kalkulation</span>
<svg style="left:30px;top:371px;" width="15" height="15" viewBox="0 0 16 16.000"><circle cx="8" cy="8" r="7" fill="#2b2b2b"/><path d="M5 4 h2.2 c-.8 -1.8 2.4 -1.8 1.6 0 H11 v2.4 c1.8 -.8 1.8 2.4 0 1.6 V11.6 H8.8 c.8 1.8 -2.4 1.8 -1.6 0 H5 V8.6 c-1.8 .8 -1.8 -2.4 0 -1.6z" fill="#fff"/></svg>
<span class="t" style="left:47.00px;top:370.84px;font-size:12px;transform:scaleX(0.8606);">Vorgangsliste</span>
<svg style="left:28.5px;top:389.5px;" width="15" height="15" viewBox="0 0 15 15"><path d="M.5 3 H2.76 A2.1 2.1 0 1 1 6.64 3 H11.5 V8.68 A2 2 0 1 1 11.5 11.32 V14.6 H7.56 A1.3 1.3 0 1 0 5.04 14.6 H.5 V9.94 A1.3 1.3 0 1 0 .5 7.46 Z" fill="url(#pzg)"/></svg>
<span class="t" style="left:47.00px;top:388.84px;font-size:12px;transform:scaleX(0.8791);">Angebot (10)</span>
<svg style="left:28.5px;top:407.5px;" width="15" height="15" viewBox="0 0 15 15"><path d="M.5 3 H2.76 A2.1 2.1 0 1 1 6.64 3 H11.5 V8.68 A2 2 0 1 1 11.5 11.32 V14.6 H7.56 A1.3 1.3 0 1 0 5.04 14.6 H.5 V9.94 A1.3 1.3 0 1 0 .5 7.46 Z" fill="url(#pzy)"/></svg>
<span class="t" style="left:47.00px;top:406.84px;font-size:12px;transform:scaleX(0.8672);">Bestellung (15)</span>
<svg style="left:43.5px;top:425.5px;" width="15" height="15" viewBox="0 0 15 15"><path d="M.5 3 H2.76 A2.1 2.1 0 1 1 6.64 3 H11.5 V8.68 A2 2 0 1 1 11.5 11.32 V14.6 H7.56 A1.3 1.3 0 1 0 5.04 14.6 H.5 V9.94 A1.3 1.3 0 1 0 .5 7.46 Z" fill="url(#pzy)"/></svg>
<span class="t" style="left:62.00px;top:424.84px;font-size:12px;transform:scaleX(0.8349);">Basis</span>
<svg style="left:45.3px;top:444.2px;" width="14" height="14" viewBox="0 0 16 16.000"><circle cx="8" cy="8" r="7.500" fill="url(#inG)" stroke="#2a88d0" stroke-width=".6"/><ellipse cx="8" cy="4.400" rx="5.400" ry="3" fill="#fff" opacity=".3"/><circle cx="8.800" cy="4.200" r="1.300" fill="#fff"/><path d="M6 6.800 h3.600 l-1.200 5.200 h1.400 l-.2 1.200 h-3.800 l1.200 -5.200 h-1.200z" fill="#fff"/></svg>
<span class="t" style="left:62.00px;top:442.84px;font-size:12px;transform:scaleX(0.8450);">Details</span>
<svg style="left:44px;top:461px;" width="15" height="15" viewBox="0 0 16 16.000"><rect x="0" y="0" width="11" height="15" fill="#fff"/><path d="M1 2 h2 M1 5 h2 M1 8 h2 M1 11 h2" stroke="#111" stroke-width="1.4"/><path d="M4.5 2 h5.5 M4.5 5 h5.5 M4.5 8 h3" stroke="#555" stroke-width="1"/><circle cx="8" cy="8.2" r="2" fill="#e8b48a"/><path d="M4.6 16 c0 -6 6.8 -6 6.8 0z" fill="#3e6fc0"/><circle cx="12.4" cy="9.4" r="1.8" fill="#d9a37a"/><path d="M9.6 16 c0 -5 6 -5 6 0z" fill="#2c3e66"/><path d="M6 7.6 c0 -3 4 -3 4 0 c-1 -1 -3 -1 -4 0z" fill="#b0552a"/></svg>
<span class="t" style="left:62.00px;top:460.84px;font-size:12px;transform:scaleX(0.8433);">Gästeliste</span>
<svg style="left:44px;top:479px;" width="15" height="15" viewBox="0 0 16 16.000"><path d="M3 1 h8 v9 h-8z" fill="#f3ddb0" stroke="#b79050" stroke-width=".7"/><path d="M5 2 v7" stroke="#555" stroke-width="1.2"/><rect x="7" y="4" width="2" height="2" fill="#d33"/><path d="M1 10 h12 l1.6 5 h-15.2z" fill="#c79a4e" stroke="#8f6a28" stroke-width=".7"/><path d="M1 12.4 h13" stroke="#a77c34" stroke-width=".7"/></svg>
<span class="t" style="left:62.00px;top:478.84px;font-size:12px;transform:scaleX(0.8836);">Menükarten</span>
<svg style="left:28.5px;top:497.5px;" width="15" height="15" viewBox="0 0 15 15"><path d="M.5 3 H2.76 A2.1 2.1 0 1 1 6.64 3 H11.5 V8.68 A2 2 0 1 1 11.5 11.32 V14.6 H7.56 A1.3 1.3 0 1 0 5.04 14.6 H.5 V9.94 A1.3 1.3 0 1 0 .5 7.46 Z" fill="url(#pzr)"/></svg>
<span class="t" style="left:47.00px;top:496.84px;font-size:12px;transform:scaleX(0.8955);">Rechnung</span>
<svg style="left:17.5px;top:393px;" width="7" height="10" viewBox="0 0 7 10"><path d="M1 .6 L5.4 4.4 L1 8.4" fill="none" stroke="#858585" stroke-width="1.4"/></svg>
<svg style="left:15.5px;top:412px;" width="10" height="6" viewBox="0 0 10 6"><path d="M.8 .6 L4.9 4.6 L9 .6" fill="none" stroke="#333" stroke-width="1.7"/></svg>
<div style="left:8px;top:405px;width:164px;height:22px;border:3px solid #e5453f;"></div>
<div style="left:177px;top:205px;width:1097px;height:26px;background:#d0d0d0;"></div>
<div style="left:177px;top:230px;width:1097px;height:1px;background:#e2e2e2;"></div>
<svg style="left:185px;top:211px;" width="15" height="14" viewBox="0 0 15 14"><rect x=".5" y=".5" width="14" height="13" fill="#fff" stroke="#c8ccd2" stroke-width=".6"/><rect x=".5" y=".5" width="14" height="3.2" fill="#4a90d8"/><text x="7.5" y="12.800" text-anchor="middle" font-family="Liberation Sans,sans-serif" font-size="10.5" font-weight="700" fill="#111" textLength="10.5" lengthAdjust="spacingAndGlyphs">15</text></svg>
<svg style="left:206px;top:216px;" width="7" height="4" viewBox="0 0 7 4"><path d="M0 0 h7 L3.5 4z" fill="#111"/></svg>
<div style="left:216px;top:210px;width:91px;height:17px;background:#fff;border:1px solid #7a7a7a;"></div>
<span class="t" style="left:218.00px;top:209.84px;font-size:12px;transform:scaleX(0.8764);">Fr, 15. Mai 2020</span>
<svg style="left:314px;top:212px;" width="14" height="14" viewBox="0 0 14 14"><circle cx="7" cy="7" r="6.6" fill="#fff" stroke="#d6d6d6" stroke-width=".8"/><path d="M7 3 V8 H10.4" fill="none" stroke="#222" stroke-width="1.2"/><path d="M7 8 L3 11" stroke="#e03030" stroke-width=".9"/></svg>
<div style="left:331px;top:210px;width:34px;height:17px;background:#fff;border:1px solid #7a7a7a;"></div>
<span class="t" style="left:335.00px;top:209.84px;font-size:12px;transform:scaleX(0.8658);">19:00</span>
<span class="t" style="left:368.00px;top:209.84px;font-size:12px;transform:scaleX(0.8700);">-</span>
<div style="left:373px;top:210px;width:34px;height:17px;background:#fff;border:1px solid #7a7a7a;"></div>
<span class="t" style="left:425.50px;top:209.84px;font-size:12px;transform:scaleX(0.8210);">Pers.</span>
<div style="left:450px;top:210px;width:38px;height:17px;background:#fff;border:1px solid #7a7a7a;"></div>
<span class="t" style="left:474.38px;top:209.84px;font-size:12px;transform:scaleX(0.8700);">20</span>
<span class="t" style="left:489.00px;top:209.84px;font-size:12px;transform:scaleX(0.8700);">-</span>
<div style="left:494px;top:210px;width:40px;height:17px;background:#fff;border:1px solid #7a7a7a;"></div>
<span class="t" style="left:520.38px;top:209.84px;font-size:12px;transform:scaleX(0.8700);">25</span>
<svg style="left:541px;top:210px;" width="16" height="16" viewBox="0 0 16 16.000"><circle cx="11" cy="4.4" r="2.9" fill="#e9b48c"/><path d="M8 4 c0 -4 6 -4 6 0 c-1.4 -1.4 -4.6 -1.4 -6 0z" fill="#c98a4a"/><path d="M6.4 15 c0 -7 9.4 -7 9.4 0z" fill="#e0409a"/><circle cx="5.4" cy="5.6" r="2.9" fill="#e8b48a"/><path d="M2.4 5.2 c0 -4 6 -4 6 0 c-1.4 -1.2 -4.6 -1.2 -6 0z" fill="#b8743a"/><path d="M.4 15.6 c0 -7 10 -7 10 0z" fill="#2f80e0"/></svg>
<span class="t" style="left:559.50px;top:209.84px;font-size:12px;transform:scaleX(0.8750);">kl.</span>
<div style="left:579px;top:210px;width:26px;height:17px;background:#fff;border:1px solid #7a7a7a;"></div>
<span class="t" style="left:611.00px;top:209.84px;font-size:12px;transform:scaleX(0.8618);">gr.</span>
<div style="left:631px;top:210px;width:26px;height:17px;background:#fff;border:1px solid #7a7a7a;"></div>
<div style="left:667px;top:210px;width:112px;height:17px;background:#e1e1e1;border:1px solid #adadad;"></div>
<span class="t" style="left:671.00px;top:209.84px;font-size:12px;transform:scaleX(0.8668);">Definitiv</span>
<svg style="left:765.5px;top:216px;" width="9" height="5" viewBox="0 0 9 5"><path d="M.6 .6 L4.5 4.4 L8.4 .6" fill="none" stroke="#444" stroke-width="1.1"/></svg>
<svg style="left:785px;top:211px;" width="15" height="15" viewBox="0 0 16 16.000"><path d="M1.200 13.800 L9 6 L10.400 7.400 L2.600 15.200z" fill="#8a8a8a" stroke="#6a6a6a" stroke-width=".4"/><circle cx="11.600" cy="4.200" r="2.600" fill="#c4c4c4" opacity=".85"/><circle cx="11.600" cy="4.200" r="1" fill="#f4f4f4"/></svg>
<svg style="left:817px;top:211px;" width="15" height="14" viewBox="0 0 15 14"><rect x=".5" y=".5" width="14" height="13" fill="#fff" stroke="#c8ccd2" stroke-width=".6"/><rect x=".5" y=".5" width="14" height="3.2" fill="#4a90d8"/><text x="7.5" y="12.800" text-anchor="middle" font-family="Liberation Sans,sans-serif" font-size="10.5" font-weight="700" fill="#111" textLength="10.5" lengthAdjust="spacingAndGlyphs">15</text></svg>
<div style="left:837px;top:210px;width:64px;height:17px;background:#fff;border:1px solid #7a7a7a;"></div>
<div style="left:177px;top:231px;width:1097px;height:110px;background:#ffff80;"></div>
<div style="left:177px;top:341px;width:1097px;height:28px;background:#ffffa8;"></div>
<div style="left:181px;top:244px;width:208px;height:85px;border:1px solid #d8d8b0;"></div>
<div style="left:186px;top:238px;width:74px;height:14px;background:#ffff80;"></div>
<span class="t" style="left:187.50px;top:236.84px;font-size:12px;transform:scaleX(0.8523);">Preisgestaltung</span>
<span class="t" style="left:188.70px;top:256.84px;font-size:12px;transform:scaleX(0.8646);">Schiene</span>
<div style="left:234px;top:257px;width:59px;height:17px;background:#e1e1e1;border:1px solid #adadad;"></div>
<span class="t" style="left:237.50px;top:256.84px;font-size:12px;transform:scaleX(0.8741);">VK</span>
<svg style="left:278px;top:263px;" width="9" height="5" viewBox="0 0 9 5"><path d="M.6 .6 L4.5 4.4 L8.4 .6" fill="none" stroke="#444" stroke-width="1.1"/></svg>
<span class="t" style="left:312.50px;top:256.84px;font-size:12px;transform:scaleX(0.8626);">Rabatt</span>
<div style="left:348px;top:257px;width:35px;height:17px;background:#fff;border:1px solid #7a7a7a;"></div>
<div style="left:188px;top:282px;width:13px;height:13px;background:#fff;border:1px solid #333;"></div>
<svg style="left:190px;top:284px;" width="9" height="9" viewBox="0 0 9 9"><path d="M1 4.6 L3.6 7.4 L8.2 1.4" fill="none" stroke="#222" stroke-width="1.2"/></svg>
<span class="t" style="left:204.50px;top:280.84px;font-size:12px;transform:scaleX(0.8277);">Brutto</span>
<svg style="left:192px;top:305px;" width="16" height="16" viewBox="0 0 16 16.000"><circle cx="3.6" cy="3.6" r="2.4" fill="none" stroke="#b8b8b8" stroke-width=".9"/><path d="M5 2.5 L11.5 4.5 L14 10 L9.5 13 L3.6 7z" fill="#f2c230" stroke="#cf9a12" stroke-width=".7"/><path d="M5 9 h5.4 v-2.4 l5 4 -5 4 v-2.4 H5z" fill="#2fb02f" stroke="#188218" stroke-width=".6"/></svg>
<span class="t" style="left:209.00px;top:304.84px;font-size:12px;transform:scaleX(0.8723);">Standardpreise</span>
<svg style="left:368px;top:307px;" width="11" height="13" viewBox="2.5 1.5 11 13.5"><rect x="3.2" y="2" width="9.6" height="12.5" rx="1" fill="#6e7278" stroke="#4c5055" stroke-width=".7"/><rect x="4.4" y="3.2" width="7.2" height="2.6" fill="#9fd08a"/><rect x="4.5" y="7" width="1.7" height="1.5" fill="#d8dade"/><rect x="7.1" y="7" width="1.7" height="1.5" fill="#d8dade"/><rect x="9.7" y="7" width="1.7" height="1.5" fill="#d8dade"/><rect x="4.5" y="9.4" width="1.7" height="1.5" fill="#d8dade"/><rect x="7.1" y="9.4" width="1.7" height="1.5" fill="#d8dade"/><rect x="9.7" y="9.4" width="1.7" height="1.5" fill="#d8dade"/><rect x="4.5" y="11.8" width="1.7" height="1.5" fill="#d8dade"/><rect x="7.1" y="11.8" width="1.7" height="1.5" fill="#d8dade"/><rect x="9.7" y="11.8" width="1.7" height="1.5" fill="#d8dade"/></svg>
<div style="left:394px;top:244px;width:252px;height:85px;border:1px solid #d8d8b0;"></div>
<div style="left:398px;top:238px;width:64px;height:14px;background:#ffff80;"></div>
<span class="t" style="left:400.50px;top:236.84px;font-size:12px;transform:scaleX(0.8916);">Buchhaltung</span>
<span class="t" style="left:400.00px;top:303.84px;font-size:12px;transform:scaleX(0.8719);">Kostenstelle</span>
<div style="left:482px;top:304px;width:158px;height:17px;background:#fff;border:1px solid #7a7a7a;"></div>
<svg style="left:626px;top:311px;" width="9" height="5" viewBox="0 0 9 5"><path d="M.6 .6 L4.5 4.4 L8.4 .6" fill="none" stroke="#444" stroke-width="1.1"/></svg>
<span class="t" style="left:1219.00px;top:235.84px;font-size:12px;transform:scaleX(0.9605);font-weight:700;">Umsatz</span>
<div style="left:1016px;top:252px;width:246px;height:2px;background:#000;"></div>
<span class="t" style="left:1017.00px;top:256.50px;font-size:13px;transform:scaleX(0.9332);font-weight:700;">Netto</span>
<span class="t" style="left:1220.00px;top:256.50px;font-size:13px;transform:scaleX(1.0059);font-weight:700;">685,92</span>
<div style="left:1016px;top:273px;width:246px;height:1px;background:#000;"></div>
<span class="t" style="left:1017.00px;top:276.84px;font-size:12px;transform:scaleX(0.8767);">MwSt. 1</span>
<span class="t" style="left:1227.00px;top:276.84px;font-size:12px;transform:scaleX(0.8719);">130,33</span>
<div style="left:1016px;top:313px;width:246px;height:1px;background:#000;"></div>
<span class="t" style="left:1017.00px;top:316.50px;font-size:13px;transform:scaleX(0.8718);font-weight:700;">Brutto</span>
<span class="t" style="left:1220.00px;top:316.50px;font-size:13px;transform:scaleX(1.0059);font-weight:700;">816,25</span>
<div style="left:1016px;top:334px;width:246px;height:2px;background:#000;"></div>
<svg style="left:183px;top:349px;" width="14" height="14" viewBox="0 0 14 14"><path d="M5 0.5 h4 v4.5 h4.5 v4 h-4.5 v4.5 h-4 v-4.5 h-4.5 v-4 h4.5z" fill="#2cac2c" stroke="#168216" stroke-width=".8"/></svg>
<svg style="left:202px;top:354px;" width="7" height="4" viewBox="0 0 7 4"><path d="M0 0 h7 L3.5 4z" fill="#111"/></svg>
<div style="left:213px;top:347px;width:57px;height:17px;background:#fff;border:1px solid #7a7a7a;"></div>
<span class="t" style="left:216.00px;top:346.84px;font-size:12px;transform:scaleX(0.8700);color:#a0a0a0;">Name</span>
<svg style="left:279px;top:348px;" width="15" height="15" viewBox="0 0 15 15.000"><path d="M11.6 1 L14 3.4 L4.6 12.8 L1.4 13.8 L2.4 10.4z" fill="#3f8fe0" stroke="#2569b8" stroke-width=".6"/><path d="M11.6 1 L14 3.4 L13 4.4 L10.6 2z" fill="#e66"/><path d="M2.4 10.4 L4.6 12.8 L1.4 13.8z" fill="#f3d9a8"/></svg>
<svg style="left:307px;top:352px;" width="14" height="5" viewBox="0 0 14 5"><rect x=".5" y=".5" width="13" height="4" rx="1.5" fill="#e02020" stroke="#b01010" stroke-width=".8"/></svg>
<svg style="left:332px;top:348px;" width="15" height="15" viewBox="0 0 15 15.000"><path d="M1 6.4 a6.4 5 0 0 1 10.6 -3 l1.6 -1.8 .6 5.6 -5.6 -.8 1.6 -1.4 a4 3 0 0 0 -5.8 1.6z" fill="#3f9be6" stroke="#1f74c4" stroke-width=".5"/><path d="M14 8.4 a6.4 5 0 0 1 -10.6 3 l-1.6 1.8 -.6 -5.6 5.6 .8 -1.6 1.4 a4 3 0 0 0 5.8 -1.6z" fill="#3f9be6" stroke="#1f74c4" stroke-width=".5"/></svg>
<svg style="left:348px;top:354px;" width="7" height="4" viewBox="0 0 7 4"><path d="M0 0 h7 L3.5 4z" fill="#111"/></svg>
<div style="left:358px;top:341.5px;width:38px;height:27px;border:3px solid #e5453f;"></div>
<svg style="left:370px;top:348px;" width="15" height="14" viewBox="0 0 15 14"><path d="M0 0 h5 l-1.6 1.6 2.4 2.4 -1.8 1.8 -2.4 -2.4 L0 5z M15 0 v5 l-1.6 -1.6 -2.4 2.4 -1.8 -1.8 2.4 -2.4 L10 0z M0 14 v-5 l1.6 1.6 2.4 -2.4 1.8 1.8 -2.4 2.4 L5 14z M15 14 h-5 l1.6 -1.6 -2.4 -2.4 1.8 -1.8 2.4 2.4 L15 9z" fill="#111"/><path d="M4 3 L8 2 L12 6 L11 10 L7 9z" fill="#e8c030" stroke="#b88e12" stroke-width=".5"/></svg>
<svg style="left:397px;top:347px;" width="16" height="16" viewBox="0 0 16 16"><rect x="0" y="1.2" width="3.4" height="1.700" fill="#e8902a"/><rect x="12.400" y="1.2" width="3.600" height="1.700" fill="#e8902a"/><rect x="0" y="4.2" width="3.4" height="1.700" fill="#c62828"/><rect x="12.400" y="4.2" width="3.600" height="1.700" fill="#2a6ed8"/><rect x="0" y="7.2" width="3.4" height="1.700" fill="#2a5ad0"/><rect x="0" y="10.2" width="3.4" height="1.700" fill="#2a5ad0"/><rect x="12.400" y="10.2" width="3.600" height="1.700" fill="#7a1616"/><rect x="0" y="13.2" width="3.4" height="1.700" fill="#7a1616"/><rect x="12.400" y="13.2" width="3.600" height="1.700" fill="#7a1616"/><path d="M4.600 7.200 h4.400 v1.600 h-4.400z" fill="#111"/><path d="M8.200 5 L11.400 8 L8.200 11z" fill="#111"/><rect x="12.400" y="7.200" width="3.600" height="1.700" fill="#c62828"/></svg>
<svg style="left:417px;top:354px;" width="7" height="4" viewBox="0 0 7 4"><path d="M0 0 h7 L3.5 4z" fill="#111"/></svg>
<div style="left:429px;top:345px;width:1px;height:22px;background:#d6d6a0;"></div>
<div style="left:430px;top:345px;width:1px;height:22px;background:#ffffe0;"></div>
<div style="left:433px;top:347px;width:89px;height:17px;background:#e1e1e1;border:1px solid #adadad;"></div>
<span class="t" style="left:437.00px;top:346.84px;font-size:12px;transform:scaleX(0.8624);">Standard</span>
<svg style="left:507px;top:353px;" width="9" height="5" viewBox="0 0 9 5"><path d="M.6 .6 L4.5 4.4 L8.4 .6" fill="none" stroke="#444" stroke-width="1.1"/></svg>
<svg style="left:532px;top:348px;" width="15" height="15" viewBox="0 0 24 24.000"><path d="M7 1.5 h9 l1.5 8 h-12z" fill="#fdfdfd" stroke="#bbb" stroke-width=".7"/><rect x="1.5" y="9" width="21" height="9" rx="2" fill="#4a4d52" stroke="#26282b" stroke-width=".8"/><rect x="1.5" y="9" width="21" height="3" rx="1.5" fill="#8b8f95"/><path d="M4 16.5 h16 l1.5 4.5 h-19z" fill="#1e2023"/><rect x="6" y="14.5" width="12" height="3.4" fill="#ececec"/></svg>
<svg style="left:551px;top:354px;" width="7" height="4" viewBox="0 0 7 4"><path d="M0 0 h7 L3.5 4z" fill="#111"/></svg>
<svg style="left:569px;top:348px;" width="14" height="14" viewBox="0 0 14 14"><rect x=".5" y="1.5" width="13" height="11" fill="#fff" stroke="#7f8fa8" stroke-width=".8"/><rect x=".5" y="1.5" width="13" height="3" fill="#5f8fd0"/><path d="M.5 7 h13 M.5 9.8 h13 M4.8 4.5 v8 M9.2 4.5 v8" stroke="#9aa8c0" stroke-width=".7"/></svg>
<svg style="left:584px;top:354px;" width="7" height="4" viewBox="0 0 7 4"><path d="M0 0 h7 L3.5 4z" fill="#111"/></svg>
<div style="left:596px;top:345px;width:1px;height:22px;background:#d6d6a0;"></div>
<div style="left:597px;top:345px;width:1px;height:22px;background:#ffffe0;"></div>
<div style="left:600px;top:347px;width:59px;height:17px;background:#fff;border:1px solid #7a7a7a;"></div>
<span class="t" style="left:603.00px;top:346.84px;font-size:12px;transform:scaleX(0.8700);color:#a0a0a0;">Suchen</span>
<svg style="left:667px;top:347px;" width="16" height="16" viewBox="0 0 16 16.000"><rect x=".5" y="1" width="13" height="10.5" fill="#eaf2fc" stroke="#5f8fd0" stroke-width=".9"/><rect x=".5" y="1" width="13" height="2.6" fill="#5f8fd0"/><path d="M2.4 5.6 h2.4 M6 5.6 h2.4 M2.4 8 h2.4 M6 8 h2.4" stroke="#5f8fd0" stroke-width="1.4"/><path d="M7.5 10 h4.5 v-2 l4 3.4 -4 3.4 v-2 h-4.5z" fill="#3f9be6" stroke="#1f6fbe" stroke-width=".5"/></svg>
<div style="left:690px;top:345px;width:1px;height:22px;background:#d6d6a0;"></div>
<div style="left:691px;top:345px;width:1px;height:22px;background:#ffffe0;"></div>
<svg style="left:699px;top:347px;" width="16" height="16" viewBox="0 0 24 24.000"><path d="M.8 2.6 h3.8 l1.2 3.4 h16.4 l-2.8 8.8 h-11.2 l-3.6 -10.4 h-3.8z" fill="#858b92" stroke="#4a4f56" stroke-width="1"/><path d="M7 8.2 h14 M7.8 10.600 h12.600 M8.600 12.800 h11.400 M9.400 6.400 v8.400 M12 6.400 v8.400 M14.600 6.400 v8.400 M17.200 6.400 v8.400 M19.600 6.400 v8" stroke="#aeb2b8" stroke-width=".5"/><path d="M7.6 15 l-1.2 2.800 h14" fill="none" stroke="#5a6068" stroke-width="1.3"/><circle cx="8.8" cy="20.6" r="2.500" fill="#222428"/><circle cx="17.800" cy="20.600" r="2.500" fill="#222428"/><circle cx="8.8" cy="20.600" r=".9" fill="#aaa"/><circle cx="17.800" cy="20.600" r=".9" fill="#aaa"/><path d="M.8 2.600 h3.800" stroke="#3a78c8" stroke-width="1.600"/></svg>
<svg style="left:727px;top:347px;" width="16" height="16" viewBox="0 0 16 16.000"><path d="M2 4 c-1.6 -.2 -1.4 -2.6 .4 -2.4 c.6 -1.6 3.6 -1.6 4.2 0 c1.8 -.2 2 2.2 .4 2.4 v1.4 h-5z" fill="#f8f8f8" stroke="#c8c8c8" stroke-width=".5"/><circle cx="4.4" cy="6.8" r="1.9" fill="#edc19c"/><path d="M.4 15 c0 -6 8 -6 8 0z" fill="#f1f1f1" stroke="#cfcfcf" stroke-width=".5"/><circle cx="11" cy="4.8" r="2.3" fill="#e2a87c"/><path d="M8.7 4.4 c0 -3.2 4.6 -3.2 4.6 0 c-1 -1.2 -3.6 -1.2 -4.6 0z" fill="#a8562a"/><path d="M7 15 c0 -6.4 8.4 -6.4 8.4 0z" fill="#3a3f48"/><path d="M10.4 9.6 l.6 3 .6 -3z" fill="#e23030"/></svg>
<div style="left:177px;top:369px;width:1097px;height:528px;background:#fff;border:1px solid #1a1a1a;"></div>
<div style="left:178px;top:370px;width:1075px;height:16px;background:#f0f0f0;"></div>
<div style="left:178px;top:386px;width:1075px;height:1px;background:#acacac;"></div>
<span class="t" style="left:180.00px;top:369.84px;font-size:12px;transform:scaleX(0.8722);">Absatz</span>
<span class="t" style="left:227.00px;top:369.84px;font-size:12px;transform:scaleX(0.8493);">Gruppe</span>
<span class="t" style="left:317.00px;top:369.84px;font-size:12px;transform:scaleX(0.8545);">Name (F6)</span>
<span class="t" style="left:923.00px;top:369.84px;font-size:12px;transform:scaleX(0.8566);">Kostenstelle</span>
<span class="t" style="left:1023.00px;top:369.84px;font-size:12px;transform:scaleX(0.8744);">Anz.</span>
<span class="t" style="left:1061.00px;top:369.84px;font-size:12px;transform:scaleX(0.8815);">Anz. 2</span>
<span class="t" style="left:1099.00px;top:369.84px;font-size:12px;transform:scaleX(0.8046);">Preis</span>
<span class="t" style="left:1152.00px;top:369.84px;font-size:12px;transform:scaleX(0.8697);">MwSt.</span>
<span class="t" style="left:1190.00px;top:369.84px;font-size:12px;transform:scaleX(0.8649);">Gesamt €</span>
<div style="left:225px;top:387px;width:89px;height:13px;background:#a0a0a0;"></div>
<div style="left:1097px;top:387px;width:52px;height:13px;background:#e8e8e8;"></div>
<div style="left:1150px;top:387px;width:37px;height:13px;background:#e8e8e8;"></div>
<div style="left:1188px;top:387px;width:64px;height:13px;background:#e8e8e8;"></div>
<div style="left:178px;top:400px;width:1075px;height:1px;background:#acacac;"></div>
<span class="t" style="left:226.80px;top:385.84px;font-size:12px;transform:scaleX(0.8587);">Bemerkung</span>
<span class="t" style="left:317.60px;top:385.84px;font-size:12px;transform:scaleX(0.9800);font-weight:700;">Ihr Menü</span>
<span class="t" style="left:1023.00px;top:385.84px;font-size:12px;transform:scaleX(0.8700);">0</span>
<span class="t" style="left:1126.79px;top:385.84px;font-size:12px;transform:scaleX(0.8650);">0,00</span>
<span class="t" style="left:1179.18px;top:385.84px;font-size:12px;transform:scaleX(0.8700);">0</span>
<span class="t" style="left:1229.79px;top:385.84px;font-size:12px;transform:scaleX(0.8650);">0,00</span>
<div style="left:225px;top:401px;width:89px;height:13px;background:#e8e8e8;"></div>
<div style="left:1188px;top:401px;width:64px;height:13px;background:#e8e8e8;"></div>
<div style="left:178px;top:414px;width:1075px;height:1px;background:#acacac;"></div>
<span class="t" style="left:226.80px;top:399.84px;font-size:12px;transform:scaleX(0.8645);">Suppe</span>
<span class="t" style="left:316.80px;top:399.84px;font-size:12px;transform:scaleX(0.8519);">Hummercreme Ginsahne</span>
<span class="t" style="left:1126.79px;top:399.84px;font-size:12px;transform:scaleX(0.8650);">7,00</span>
<span class="t" style="left:1179.18px;top:399.84px;font-size:12px;transform:scaleX(0.8700);">1</span>
<span class="t" style="left:1218.25px;top:399.84px;font-size:12px;transform:scaleX(0.8650);">175,00</span>
<div style="left:225px;top:415px;width:89px;height:13px;background:#a0a0a0;"></div>
<div style="left:1097px;top:415px;width:52px;height:13px;background:#e8e8e8;"></div>
<div style="left:1150px;top:415px;width:37px;height:13px;background:#e8e8e8;"></div>
<div style="left:1188px;top:415px;width:64px;height:13px;background:#e8e8e8;"></div>
<div style="left:178px;top:428px;width:1075px;height:1px;background:#acacac;"></div>
<span class="t" style="left:226.80px;top:413.84px;font-size:12px;transform:scaleX(0.8587);">Bemerkung</span>
<span class="t" style="left:1023.00px;top:413.84px;font-size:12px;transform:scaleX(0.8700);">0</span>
<span class="t" style="left:1126.79px;top:413.84px;font-size:12px;transform:scaleX(0.8650);">0,00</span>
<span class="t" style="left:1179.18px;top:413.84px;font-size:12px;transform:scaleX(0.8700);">1</span>
<span class="t" style="left:1229.79px;top:413.84px;font-size:12px;transform:scaleX(0.8650);">0,00</span>
<div style="left:225px;top:429px;width:89px;height:13px;background:#e8e8e8;"></div>
<div style="left:1188px;top:429px;width:64px;height:13px;background:#e8e8e8;"></div>
<div style="left:178px;top:442px;width:1075px;height:1px;background:#acacac;"></div>
<span class="t" style="left:226.80px;top:427.84px;font-size:12px;transform:scaleX(0.8817);">Hauptgericht</span>
<span class="t" style="left:316.80px;top:427.84px;font-size:12px;transform:scaleX(0.8744);">Entenbrust Orangensauce</span>
<span class="t" style="left:1121.02px;top:427.84px;font-size:12px;transform:scaleX(0.8650);">16,90</span>
<span class="t" style="left:1179.18px;top:427.84px;font-size:12px;transform:scaleX(0.8700);">1</span>
<span class="t" style="left:1218.25px;top:427.84px;font-size:12px;transform:scaleX(0.8650);">422,50</span>
<div style="left:225px;top:443px;width:89px;height:13px;background:#e8e8e8;"></div>
<div style="left:1188px;top:443px;width:64px;height:13px;background:#e8e8e8;"></div>
<div style="left:178px;top:456px;width:1075px;height:1px;background:#acacac;"></div>
<span class="t" style="left:226.80px;top:441.84px;font-size:12px;transform:scaleX(0.8562);">Beilagen</span>
<span class="t" style="left:316.80px;top:441.84px;font-size:12px;transform:scaleX(0.8771);">Brokkoli Mandelbutter</span>
<span class="t" style="left:1126.79px;top:441.84px;font-size:12px;transform:scaleX(0.8650);">1,90</span>
<span class="t" style="left:1179.18px;top:441.84px;font-size:12px;transform:scaleX(0.8700);">1</span>
<span class="t" style="left:1224.02px;top:441.84px;font-size:12px;transform:scaleX(0.8650);">47,50</span>
<div style="left:225px;top:457px;width:89px;height:13px;background:#e8e8e8;"></div>
<div style="left:1188px;top:457px;width:64px;height:13px;background:#e8e8e8;"></div>
<div style="left:178px;top:470px;width:1075px;height:1px;background:#acacac;"></div>
<span class="t" style="left:226.80px;top:455.84px;font-size:12px;transform:scaleX(0.8562);">Beilagen</span>
<span class="t" style="left:316.80px;top:455.84px;font-size:12px;transform:scaleX(0.7722);">Kart</span>
<span class="t" style="left:1126.79px;top:455.84px;font-size:12px;transform:scaleX(0.8650);">0,45</span>
<span class="t" style="left:1152.50px;top:455.84px;font-size:12px;transform:scaleX(0.8700);">1</span>
<span class="t" style="left:1224.79px;top:455.84px;font-size:12px;transform:scaleX(0.8650);">11,25</span>
<div style="left:225px;top:471px;width:89px;height:13px;background:#a0a0a0;"></div>
<div style="left:1097px;top:471px;width:52px;height:13px;background:#e8e8e8;"></div>
<div style="left:1150px;top:471px;width:37px;height:13px;background:#e8e8e8;"></div>
<div style="left:1188px;top:471px;width:64px;height:13px;background:#e8e8e8;"></div>
<div style="left:178px;top:484px;width:1075px;height:1px;background:#acacac;"></div>
<span class="t" style="left:226.80px;top:469.84px;font-size:12px;transform:scaleX(0.8587);">Bemerkung</span>
<span class="t" style="left:1023.00px;top:469.84px;font-size:12px;transform:scaleX(0.8700);">0</span>
<span class="t" style="left:1126.79px;top:469.84px;font-size:12px;transform:scaleX(0.8650);">0,00</span>
<span class="t" style="left:1179.18px;top:469.84px;font-size:12px;transform:scaleX(0.8700);">1</span>
<span class="t" style="left:1229.79px;top:469.84px;font-size:12px;transform:scaleX(0.8650);">0,00</span>
<div style="left:225px;top:485px;width:89px;height:13px;background:#e8e8e8;"></div>
<div style="left:1188px;top:485px;width:64px;height:13px;background:#e8e8e8;"></div>
<div style="left:178px;top:498px;width:1075px;height:1px;background:#acacac;"></div>
<span class="t" style="left:226.80px;top:483.84px;font-size:12px;transform:scaleX(0.8393);">Dessert</span>
<span class="t" style="left:316.80px;top:483.84px;font-size:12px;transform:scaleX(0.8626);">Dessertvaration</span>
<span class="t" style="left:1126.79px;top:483.84px;font-size:12px;transform:scaleX(0.8650);">6,40</span>
<span class="t" style="left:1179.18px;top:483.84px;font-size:12px;transform:scaleX(0.8700);">1</span>
<span class="t" style="left:1218.25px;top:483.84px;font-size:12px;transform:scaleX(0.8650);">160,00</span>
<div style="left:225px;top:499px;width:89px;height:13px;background:#e8e8e8;"></div>
<div style="left:1188px;top:499px;width:64px;height:13px;background:#e8e8e8;"></div>
<div style="left:178px;top:512px;width:1075px;height:1px;background:#acacac;"></div>
<span class="t" style="left:226.80px;top:497.84px;font-size:12px;transform:scaleX(0.8805);">Flaschen Wein</span>
<span class="t" style="left:316.80px;top:497.84px;font-size:12px;transform:scaleX(0.8668);">Bardolino Classico Superiore D.O.C. 0,75 l Masi</span>
<span class="t" style="left:1023.00px;top:497.84px;font-size:12px;transform:scaleX(0.8700);">0</span>
<span class="t" style="left:1121.02px;top:497.84px;font-size:12px;transform:scaleX(0.8650);">16,90</span>
<span class="t" style="left:1179.18px;top:497.84px;font-size:12px;transform:scaleX(0.8700);">1</span>
<span class="t" style="left:1229.79px;top:497.84px;font-size:12px;transform:scaleX(0.8650);">0,00</span>
<div style="left:225px;top:513px;width:89px;height:13px;background:#e8e8e8;"></div>
<div style="left:1188px;top:513px;width:64px;height:13px;background:#e8e8e8;"></div>
<div style="left:178px;top:526px;width:1075px;height:1px;background:#acacac;"></div>
<span class="t" style="left:226.80px;top:511.84px;font-size:12px;transform:scaleX(0.8805);">Flaschen Wein</span>
<span class="t" style="left:316.80px;top:511.84px;font-size:12px;transform:scaleX(0.8773);">Laforêt Bourgogne Pinot Noir 0,75 l Joseph Drouhin</span>
<span class="t" style="left:1023.00px;top:511.84px;font-size:12px;transform:scaleX(0.8700);">0</span>
<span class="t" style="left:1121.02px;top:511.84px;font-size:12px;transform:scaleX(0.8650);">33,00</span>
<span class="t" style="left:1179.18px;top:511.84px;font-size:12px;transform:scaleX(0.8700);">1</span>
<span class="t" style="left:1229.79px;top:511.84px;font-size:12px;transform:scaleX(0.8650);">0,00</span>
<div style="left:225px;top:527px;width:89px;height:13px;background:#e8e8e8;"></div>
<div style="left:1188px;top:527px;width:64px;height:13px;background:#e8e8e8;"></div>
<div style="left:178px;top:540px;width:1075px;height:1px;background:#acacac;"></div>
<span class="t" style="left:226.80px;top:525.84px;font-size:12px;transform:scaleX(0.8805);">Flaschen Wein</span>
<span class="t" style="left:316.80px;top:525.84px;font-size:12px;transform:scaleX(0.8546);">Pinot Blanc 0,75 l Josmeyer &amp; Fils</span>
<span class="t" style="left:1023.00px;top:525.84px;font-size:12px;transform:scaleX(0.8700);">0</span>
<span class="t" style="left:1121.02px;top:525.84px;font-size:12px;transform:scaleX(0.8650);">33,00</span>
<span class="t" style="left:1179.18px;top:525.84px;font-size:12px;transform:scaleX(0.8700);">1</span>
<span class="t" style="left:1229.79px;top:525.84px;font-size:12px;transform:scaleX(0.8650);">0,00</span>
<div style="left:225px;top:541px;width:89px;height:13px;background:#e8e8e8;"></div>
<div style="left:1188px;top:541px;width:64px;height:13px;background:#e8e8e8;"></div>
<div style="left:178px;top:554px;width:1075px;height:1px;background:#acacac;"></div>
<span class="t" style="left:226.80px;top:539.84px;font-size:12px;transform:scaleX(0.8805);">Flaschen Wein</span>
<span class="t" style="left:316.80px;top:539.84px;font-size:12px;transform:scaleX(0.8788);">Umweger Stich den Buben Müller-Thurgau 0,75 l</span>
<span class="t" style="left:1023.00px;top:539.84px;font-size:12px;transform:scaleX(0.8700);">0</span>
<span class="t" style="left:1121.02px;top:539.84px;font-size:12px;transform:scaleX(0.8650);">24,00</span>
<span class="t" style="left:1179.18px;top:539.84px;font-size:12px;transform:scaleX(0.8700);">1</span>
<span class="t" style="left:1229.79px;top:539.84px;font-size:12px;transform:scaleX(0.8650);">0,00</span>
<div style="left:225px;top:555px;width:89px;height:13px;background:#e8e8e8;"></div>
<div style="left:1188px;top:555px;width:64px;height:13px;background:#e8e8e8;"></div>
<div style="left:178px;top:568px;width:1075px;height:1px;background:#acacac;"></div>
<span class="t" style="left:226.80px;top:553.84px;font-size:12px;transform:scaleX(0.8298);">Aperitif</span>
<span class="t" style="left:316.80px;top:553.84px;font-size:12px;transform:scaleX(0.8595);">Champagneraperitif</span>
<span class="t" style="left:1023.00px;top:553.84px;font-size:12px;transform:scaleX(0.8700);">0</span>
<span class="t" style="left:1126.79px;top:553.84px;font-size:12px;transform:scaleX(0.8650);">9,00</span>
<span class="t" style="left:1179.18px;top:553.84px;font-size:12px;transform:scaleX(0.8700);">1</span>
<span class="t" style="left:1229.79px;top:553.84px;font-size:12px;transform:scaleX(0.8650);">0,00</span>
<div style="left:225px;top:569px;width:89px;height:13px;background:#e8e8e8;"></div>
<div style="left:1188px;top:569px;width:64px;height:13px;background:#e8e8e8;"></div>
<div style="left:178px;top:582px;width:1075px;height:1px;background:#acacac;"></div>
<span class="t" style="left:226.80px;top:567.84px;font-size:12px;transform:scaleX(0.8737);">Dekoration</span>
<span class="t" style="left:316.80px;top:567.84px;font-size:12px;transform:scaleX(0.8747);">Blumengestecke</span>
<span class="t" style="left:1023.00px;top:567.84px;font-size:12px;transform:scaleX(0.8700);">0</span>
<span class="t" style="left:1126.79px;top:567.84px;font-size:12px;transform:scaleX(0.8650);">8,00</span>
<span class="t" style="left:1179.18px;top:567.84px;font-size:12px;transform:scaleX(0.8700);">1</span>
<span class="t" style="left:1229.79px;top:567.84px;font-size:12px;transform:scaleX(0.8650);">0,00</span>
<div style="left:225px;top:583px;width:89px;height:13px;background:#e8e8e8;"></div>
<div style="left:1188px;top:583px;width:64px;height:13px;background:#e8e8e8;"></div>
<div style="left:178px;top:596px;width:1075px;height:1px;background:#acacac;"></div>
<span class="t" style="left:226.80px;top:581.84px;font-size:12px;transform:scaleX(0.8759);">sonst. Leistungen</span>
<span class="t" style="left:316.80px;top:581.84px;font-size:12px;transform:scaleX(0.8783);">Menükarte</span>
<span class="t" style="left:1023.00px;top:581.84px;font-size:12px;transform:scaleX(0.8700);">0</span>
<span class="t" style="left:1126.79px;top:581.84px;font-size:12px;transform:scaleX(0.8650);">1,50</span>
<span class="t" style="left:1179.18px;top:581.84px;font-size:12px;transform:scaleX(0.8700);">1</span>
<span class="t" style="left:1229.79px;top:581.84px;font-size:12px;transform:scaleX(0.8650);">0,00</span>
<div style="left:224px;top:370px;width:1px;height:227px;background:#acacac;"></div>
<div style="left:314px;top:370px;width:1px;height:227px;background:#acacac;"></div>
<div style="left:920px;top:370px;width:1px;height:227px;background:#acacac;"></div>
<div style="left:1019px;top:370px;width:1px;height:227px;background:#acacac;"></div>
<div style="left:1058px;top:370px;width:1px;height:227px;background:#acacac;"></div>
<div style="left:1096px;top:370px;width:1px;height:227px;background:#acacac;"></div>
<div style="left:1149px;top:370px;width:1px;height:227px;background:#acacac;"></div>
<div style="left:1187px;top:370px;width:1px;height:227px;background:#acacac;"></div>
<div style="left:1252px;top:370px;width:1px;height:227px;background:#acacac;"></div>
<div style="left:206px;top:458px;width:14px;height:11px;background:#e1e1e1;border:1px solid #adadad;"></div>
<svg style="left:209px;top:465px;" width="8" height="4" viewBox="0 0 8 4"><path d="M.5 .5 L4 3.4 L7.5 .5" fill="none" stroke="#333" stroke-width="1"/></svg>
<div style="left:1003px;top:458px;width:14px;height:11px;background:#e1e1e1;border:1px solid #adadad;"></div>
<svg style="left:1006px;top:465px;" width="8" height="4" viewBox="0 0 8 4"><path d="M.5 .5 L4 3.4 L7.5 .5" fill="none" stroke="#333" stroke-width="1"/></svg>
<div style="left:1169px;top:458px;width:15px;height:11px;background:#e1e1e1;border:1px solid #adadad;"></div>
<svg style="left:1172px;top:465px;" width="8" height="4" viewBox="0 0 8 4"><path d="M.5 .5 L4 3.4 L7.5 .5" fill="none" stroke="#333" stroke-width="1"/></svg>
<div style="left:220px;top:384px;width:803px;height:90px;border:3px solid #e5453f;"></div>
<div style="left:1256px;top:370px;width:17px;height:526px;background:#f0f0f0;"></div>
<svg style="left:1260px;top:376px;" width="9" height="6" viewBox="0 0 9 6"><path d="M.8 5 L4.5 1.2 L8.2 5" fill="none" stroke="#b4b4b4" stroke-width="1.6"/></svg>
<svg style="left:1260px;top:868px;" width="9" height="6" viewBox="0 0 9 6"><path d="M.8 1 L4.5 4.8 L8.2 1" fill="none" stroke="#b4b4b4" stroke-width="1.6"/></svg>
<div style="left:0px;top:905px;width:1283px;height:31px;background:#f0f0f0;"></div>
<div style="left:0px;top:905px;width:1283px;height:1px;background:#fafafa;"></div>
<svg style="left:8px;top:912px;" width="17" height="17" viewBox="0 0 24 24.000"><path d="M1 2 h9.600 l1.600 -1.400 h6 v15.400 h-17.200z" fill="#f0d060" stroke="#dcbc48" stroke-width=".5"/><path d="M1 4.400 h15.600 v11.600 h-15.600z" fill="#f8e07e"/><ellipse cx="6.200" cy="18.600" rx="4" ry="3.200" fill="#d8d8d0" fill-opacity=".55" stroke="#222" stroke-width="1.500" transform="rotate(-14 6.2 18.6)"/><ellipse cx="16.200" cy="16.400" rx="4" ry="3.200" fill="#d8d8d0" fill-opacity=".55" stroke="#222" stroke-width="1.500" transform="rotate(-14 16.2 16.4)"/><path d="M10 17.400 c.8 -.9 1.600 -1.100 2.400 -.5 M19.800 14.600 c1 -2.400 -1.600 -5.400 -5.800 -5.800 M2.400 17.600 c-.6 -3 2.400 -5.600 6.400 -6.200" fill="none" stroke="#222" stroke-width="1.200"/></svg>
<svg style="left:25px;top:920px;" width="7" height="4" viewBox="0 0 7 4"><path d="M0 0 h7 L3.5 4z" fill="#111"/></svg>
<svg style="left:38px;top:914px;" width="15" height="14" viewBox="0 0 14 14"><rect x=".5" y="1.5" width="13" height="11" fill="#fff" stroke="#7f8fa8" stroke-width=".8"/><rect x=".5" y="1.5" width="13" height="3" fill="#5f8fd0"/><path d="M.5 7 h13 M.5 9.8 h13 M4.8 4.5 v8 M9.2 4.5 v8" stroke="#9aa8c0" stroke-width=".7"/></svg>
<span class="t" style="left:56.00px;top:912.84px;font-size:12px;transform:scaleX(0.8854);">1 Textvorlage</span>
<svg style="left:127px;top:920px;" width="7" height="4" viewBox="0 0 7 4"><path d="M0 0 h7 L3.5 4z" fill="#111"/></svg>
<div style="left:139px;top:909px;width:153px;height:24px;background:#d9d9d9;"></div>
<svg style="left:142px;top:913px;" width="16" height="16" viewBox="0 0 24 24.000"><circle cx="12" cy="12" r="11.4" fill="url(#cpG)" stroke="#a87a18" stroke-width=".7"/><circle cx="12" cy="12" r="8.3" fill="#f6f6f2" stroke="#b98c2a" stroke-width=".8"/><path d="M14.6 4.6 L13.7 12.9 L10.3 11.1z" fill="#e32828"/><path d="M9.4 19.4 L10.3 11.1 L13.7 12.9z" fill="#3c3c44"/></svg>
<span class="t" style="left:161.00px;top:912.84px;font-size:12px;transform:scaleX(0.8775);">08.04.2020 [+6] - Kalender</span>
<div style="left:294px;top:909px;width:198px;height:24px;background:#cccccc;"></div>
<svg style="left:299px;top:913px;" width="16" height="16" viewBox="0 0 24 24.000"><rect x="4.6" y="1.2" width="15.6" height="21.6" rx="2" fill="url(#nbG)" stroke="#a8480a" stroke-width=".8"/><rect x="4.6" y="1.2" width="3.6" height="21.6" fill="#5a4a42" opacity=".8"/><rect x="10" y="4.6" width="7.4" height="4.8" fill="#fbf3ea" stroke="#9a5a20" stroke-width=".7"/><rect x="2.4" y="3.4" width="4.2" height="1.4" rx=".7" fill="#55585e"/><rect x="2.4" y="6.4" width="4.2" height="1.4" rx=".7" fill="#55585e"/><rect x="2.4" y="9.4" width="4.2" height="1.4" rx=".7" fill="#55585e"/><rect x="2.4" y="12.4" width="4.2" height="1.4" rx=".7" fill="#55585e"/><rect x="2.4" y="15.4" width="4.2" height="1.4" rx=".7" fill="#55585e"/><rect x="2.4" y="18.4" width="4.2" height="1.4" rx=".7" fill="#55585e"/></svg>
<span class="t" style="left:316.00px;top:912.84px;font-size:12px;transform:scaleX(1.0461);font-weight:700;">15.05.2020 Bauer, Karl #4543</span>
<div style="left:1257px;top:909px;width:24px;height:24px;background:#f4f4f4;border:1px solid #adadad;"></div>
<svg style="left:1262px;top:915px;" width="14" height="12" viewBox="0 0 14 12"><rect x=".5" y=".5" width="13" height="11" fill="#fff" stroke="#c4c8cc"/><rect x=".5" y=".5" width="13" height="2.600" fill="#2490d6"/></svg>
<div style="left:0px;top:0px;width:1283px;height:1px;background:#555;"></div>
<div style="left:0px;top:0px;width:1px;height:936px;background:#6a6a6a;"></div>
<div style="left:1282px;top:0px;width:1px;height:936px;background:#8a8a8a;"></div>
<div style="left:0px;top:935px;width:1283px;height:1px;background:#808080;"></div>
</body></html>
